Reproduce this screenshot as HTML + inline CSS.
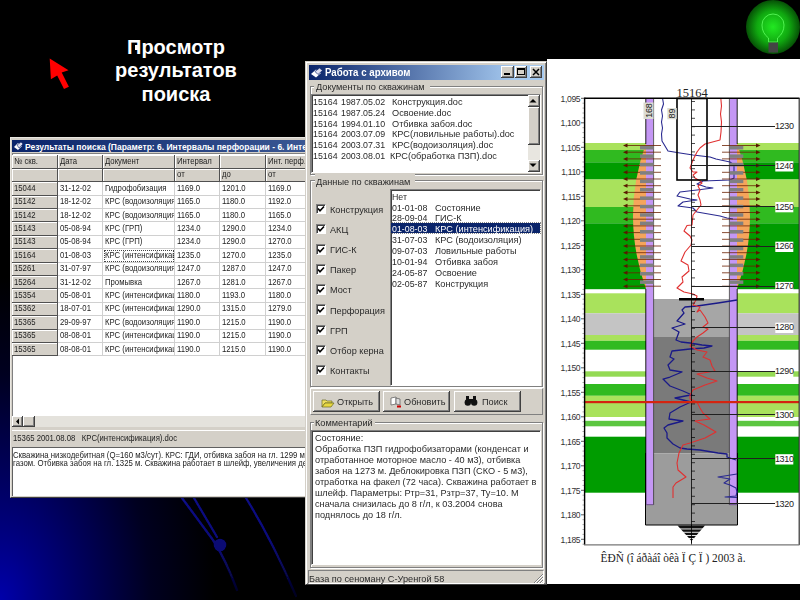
<!DOCTYPE html><html><head><meta charset="utf-8"><style>
*{margin:0;padding:0;box-sizing:border-box}
html,body{width:800px;height:600px;overflow:hidden;background:#000}
body{position:relative;font-family:"Liberation Sans",sans-serif;color:#000}
.abs{position:absolute}
.t{position:absolute;white-space:nowrap;line-height:1}
</style></head><body>
<svg class="abs" style="left:0;top:0" width="800" height="600">
<defs><radialGradient id="bg" cx="0" cy="600" r="215" gradientUnits="userSpaceOnUse" gradientTransform="translate(0,600) scale(1,1.5) translate(0,-600)">
<stop offset="0" stop-color="#0000aa"/><stop offset="0.2" stop-color="#000080"/><stop offset="0.45" stop-color="#000050"/><stop offset="0.7" stop-color="#000020"/><stop offset="1" stop-color="#000000"/></radialGradient></defs>
<rect width="800" height="600" fill="url(#bg)"/>
<defs><linearGradient id="lf" x1="0" y1="495" x2="0" y2="595" gradientUnits="userSpaceOnUse"><stop offset="0" stop-color="#1212a0"/><stop offset="0.45" stop-color="#0e0e90"/><stop offset="0.75" stop-color="#080860"/><stop offset="1" stop-color="#030326"/></linearGradient>
<filter id="bl" x="-20%" y="-20%" width="140%" height="140%"><feGaussianBlur stdDeviation="0.7"/></filter></defs>
<g filter="url(#bl)" fill="none" stroke="url(#lf)" stroke-width="2.3" opacity="0.85" stroke-linejoin="round" stroke-linecap="round">
<path d="M166 476 Q175 487 182 498 L213 540 Q226 560 237 590"/>
<path d="M180 476 Q188 487 194 498 L217 537"/>
<path d="M234 476 Q241 487 246 498 Q272 540 296 596"/>
<circle cx="220" cy="545" r="6.3" fill="#0a0a88" stroke="none"/>
</g>
</svg>
<div class="t" style="left:0;width:352px;top:35.5px;text-align:center;color:#fff;font-weight:bold;font-size:20px;line-height:23.8px;white-space:normal">Просмотр<br>результатов<br>поиска</div>
<div class="abs" style="left:135px;top:45px;width:3px;height:5px;background:#fff"></div><svg class="abs" style="left:0;top:0" width="100" height="100"><polygon points="49.7,58.6 68.5,70.2 61.7,72.5 68.9,86.7 64,89 57.2,75.5 50.9,79.2" fill="#ff0000"/></svg>
<svg class="abs" style="left:740px;top:0" width="60" height="60">
<defs><radialGradient id="gb" cx="33" cy="27" r="27" gradientUnits="userSpaceOnUse"><stop offset="0" stop-color="#22e822"/><stop offset="0.6" stop-color="#10a810"/><stop offset="1" stop-color="#065006"/></radialGradient></defs>
<circle cx="33" cy="27" r="27" fill="url(#gb)"/>
<path d="M28.5 42 L28.5 38 Q22 33 22 25 A11 11 0 0 1 44 25 Q44 33 37.5 38 L37.5 42 Z" fill="none" stroke="#60ff60" stroke-width="0.8"/>
<rect x="28.5" y="42.5" width="9.5" height="10" fill="#444"/>
</svg>
<div class="abs" style="left:10px;top:137px;width:300px;height:361px;background:#d4d0c8;border-top:1px solid #e8e6e0;border-left:1px solid #e8e6e0;border-bottom:1px solid #404040;overflow:hidden"><div class="abs" style="left:1px;top:2px;width:960px;height:12px;background:linear-gradient(to right,#0a246a,#a6caf0)"></div><svg class="abs" style="left:2px;top:3px" width="11" height="10"><path d="M1 6 L5 2 L9 5 L5 9 Z" fill="#fff"/><path d="M4 4 L8 1 L10 3 L6 7Z" fill="#dde" stroke="#0a246a" stroke-width="0.6"/></svg><div class="t" style="left:14px;top:5px;font-size:8.5px;font-weight:bold;color:#fff">Результаты поиска (Параметр: 6. Интервалы перфорации - 6. Интенсификация)</div><div class="abs" style="left:1px;top:15px;width:299px;height:264px;background:#fff;border-top:1px solid #808080;border-left:1px solid #808080"></div><div class="abs" style="left:1px;top:17.4px;width:46px;height:13.4px;background:#d4d0c8;border-right:1px solid #505050;border-bottom:1px solid #505050;box-shadow:inset 1px 1px #fff"></div><div class="abs" style="left:1.0px;top:17.4px;width:45px;height:12.4px;overflow:hidden"><div class="t" style="left:2px;top:1.5px;font-size:8.6px;transform:scaleX(0.9);transform-origin:0 0;color:#222">№ скв.</div></div><div class="abs" style="left:47px;top:17.4px;width:45px;height:13.4px;background:#d4d0c8;border-right:1px solid #505050;border-bottom:1px solid #505050;box-shadow:inset 1px 1px #fff"></div><div class="abs" style="left:47.0px;top:17.4px;width:44px;height:12.4px;overflow:hidden"><div class="t" style="left:2px;top:1.5px;font-size:8.6px;transform:scaleX(0.9);transform-origin:0 0;color:#222">Дата</div></div><div class="abs" style="left:92px;top:17.4px;width:72px;height:13.4px;background:#d4d0c8;border-right:1px solid #505050;border-bottom:1px solid #505050;box-shadow:inset 1px 1px #fff"></div><div class="abs" style="left:92.0px;top:17.4px;width:71px;height:12.4px;overflow:hidden"><div class="t" style="left:2px;top:1.5px;font-size:8.6px;transform:scaleX(0.9);transform-origin:0 0;color:#222">Документ</div></div><div class="abs" style="left:164px;top:17.4px;width:45px;height:13.4px;background:#d4d0c8;border-right:1px solid #505050;border-bottom:1px solid #505050;box-shadow:inset 1px 1px #fff"></div><div class="abs" style="left:164.0px;top:17.4px;width:44px;height:12.4px;overflow:hidden"><div class="t" style="left:2px;top:1.5px;font-size:8.6px;transform:scaleX(0.9);transform-origin:0 0;color:#222">Интервал</div></div><div class="abs" style="left:209px;top:17.4px;width:46px;height:13.4px;background:#d4d0c8;border-right:1px solid #505050;border-bottom:1px solid #505050;box-shadow:inset 1px 1px #fff"></div><div class="abs" style="left:255px;top:17.4px;width:75px;height:13.4px;background:#d4d0c8;border-right:1px solid #505050;border-bottom:1px solid #505050;box-shadow:inset 1px 1px #fff"></div><div class="abs" style="left:255.0px;top:17.4px;width:74px;height:12.4px;overflow:hidden"><div class="t" style="left:2px;top:1.5px;font-size:8.6px;transform:scaleX(0.9);transform-origin:0 0;color:#222">Инт. перф.</div></div><div class="abs" style="left:1px;top:30.8px;width:46px;height:13.4px;background:#d4d0c8;border-right:1px solid #505050;border-bottom:1px solid #505050;box-shadow:inset 1px 1px #fff"></div><div class="abs" style="left:47px;top:30.8px;width:45px;height:13.4px;background:#d4d0c8;border-right:1px solid #505050;border-bottom:1px solid #505050;box-shadow:inset 1px 1px #fff"></div><div class="abs" style="left:92px;top:30.8px;width:72px;height:13.4px;background:#d4d0c8;border-right:1px solid #505050;border-bottom:1px solid #505050;box-shadow:inset 1px 1px #fff"></div><div class="abs" style="left:164px;top:30.8px;width:45px;height:13.4px;background:#d4d0c8;border-right:1px solid #505050;border-bottom:1px solid #505050;box-shadow:inset 1px 1px #fff"></div><div class="abs" style="left:164.0px;top:30.8px;width:44px;height:12.4px;overflow:hidden"><div class="t" style="left:2px;top:1.5px;font-size:8.6px;transform:scaleX(0.9);transform-origin:0 0;color:#222">от</div></div><div class="abs" style="left:209px;top:30.8px;width:46px;height:13.4px;background:#d4d0c8;border-right:1px solid #505050;border-bottom:1px solid #505050;box-shadow:inset 1px 1px #fff"></div><div class="abs" style="left:209.0px;top:30.8px;width:45px;height:12.4px;overflow:hidden"><div class="t" style="left:2px;top:1.5px;font-size:8.6px;transform:scaleX(0.9);transform-origin:0 0;color:#222">до</div></div><div class="abs" style="left:255px;top:30.8px;width:75px;height:13.4px;background:#d4d0c8;border-right:1px solid #505050;border-bottom:1px solid #505050;box-shadow:inset 1px 1px #fff"></div><div class="abs" style="left:255.0px;top:30.8px;width:74px;height:12.4px;overflow:hidden"><div class="t" style="left:2px;top:1.5px;font-size:8.6px;transform:scaleX(0.9);transform-origin:0 0;color:#222">от</div></div><div class="abs" style="left:1px;top:44.2px;width:46px;height:13.4px;background:#d4d0c8;border-right:1px solid #505050;border-bottom:1px solid #505050;box-shadow:inset 1px 1px #fff"></div><div class="abs" style="left:1.0px;top:44.2px;width:45px;height:12.4px;overflow:hidden"><div class="t" style="left:2px;top:1.5px;font-size:8.6px;transform:scaleX(0.9);transform-origin:0 0;color:#222">15044</div></div><div class="abs" style="left:47px;top:44.2px;width:45px;height:13.4px;background:#fff;border-right:1px solid #d0d0d0;border-bottom:1px solid #d0d0d0"></div><div class="abs" style="left:47.0px;top:44.2px;width:44px;height:12.4px;overflow:hidden"><div class="t" style="left:2px;top:1.5px;font-size:8.6px;transform:scaleX(0.9);transform-origin:0 0;color:#222">31-12-02</div></div><div class="abs" style="left:92px;top:44.2px;width:72px;height:13.4px;background:#fff;border-right:1px solid #d0d0d0;border-bottom:1px solid #d0d0d0"></div><div class="abs" style="left:92.0px;top:44.2px;width:71px;height:12.4px;overflow:hidden"><div class="t" style="left:2px;top:1.5px;font-size:8.6px;transform:scaleX(0.9);transform-origin:0 0;color:#222">Гидрофобизация</div></div><div class="abs" style="left:164px;top:44.2px;width:45px;height:13.4px;background:#fff;border-right:1px solid #d0d0d0;border-bottom:1px solid #d0d0d0"></div><div class="abs" style="left:164.0px;top:44.2px;width:44px;height:12.4px;overflow:hidden"><div class="t" style="left:2px;top:1.5px;font-size:8.6px;transform:scaleX(0.9);transform-origin:0 0;color:#222">1169.0</div></div><div class="abs" style="left:209px;top:44.2px;width:46px;height:13.4px;background:#fff;border-right:1px solid #d0d0d0;border-bottom:1px solid #d0d0d0"></div><div class="abs" style="left:209.0px;top:44.2px;width:45px;height:12.4px;overflow:hidden"><div class="t" style="left:2px;top:1.5px;font-size:8.6px;transform:scaleX(0.9);transform-origin:0 0;color:#222">1201.0</div></div><div class="abs" style="left:255px;top:44.2px;width:75px;height:13.4px;background:#fff;border-right:1px solid #d0d0d0;border-bottom:1px solid #d0d0d0"></div><div class="abs" style="left:255.0px;top:44.2px;width:74px;height:12.4px;overflow:hidden"><div class="t" style="left:2px;top:1.5px;font-size:8.6px;transform:scaleX(0.9);transform-origin:0 0;color:#222">1169.0</div></div><div class="abs" style="left:1px;top:57.6px;width:46px;height:13.4px;background:#d4d0c8;border-right:1px solid #505050;border-bottom:1px solid #505050;box-shadow:inset 1px 1px #fff"></div><div class="abs" style="left:1.0px;top:57.6px;width:45px;height:12.4px;overflow:hidden"><div class="t" style="left:2px;top:1.5px;font-size:8.6px;transform:scaleX(0.9);transform-origin:0 0;color:#222">15142</div></div><div class="abs" style="left:47px;top:57.6px;width:45px;height:13.4px;background:#fff;border-right:1px solid #d0d0d0;border-bottom:1px solid #d0d0d0"></div><div class="abs" style="left:47.0px;top:57.6px;width:44px;height:12.4px;overflow:hidden"><div class="t" style="left:2px;top:1.5px;font-size:8.6px;transform:scaleX(0.9);transform-origin:0 0;color:#222">18-12-02</div></div><div class="abs" style="left:92px;top:57.6px;width:72px;height:13.4px;background:#fff;border-right:1px solid #d0d0d0;border-bottom:1px solid #d0d0d0"></div><div class="abs" style="left:92.0px;top:57.6px;width:71px;height:12.4px;overflow:hidden"><div class="t" style="left:2px;top:1.5px;font-size:8.6px;transform:scaleX(0.9);transform-origin:0 0;color:#222">КРС (водоизоляция</div></div><div class="abs" style="left:164px;top:57.6px;width:45px;height:13.4px;background:#fff;border-right:1px solid #d0d0d0;border-bottom:1px solid #d0d0d0"></div><div class="abs" style="left:164.0px;top:57.6px;width:44px;height:12.4px;overflow:hidden"><div class="t" style="left:2px;top:1.5px;font-size:8.6px;transform:scaleX(0.9);transform-origin:0 0;color:#222">1165.0</div></div><div class="abs" style="left:209px;top:57.6px;width:46px;height:13.4px;background:#fff;border-right:1px solid #d0d0d0;border-bottom:1px solid #d0d0d0"></div><div class="abs" style="left:209.0px;top:57.6px;width:45px;height:12.4px;overflow:hidden"><div class="t" style="left:2px;top:1.5px;font-size:8.6px;transform:scaleX(0.9);transform-origin:0 0;color:#222">1180.0</div></div><div class="abs" style="left:255px;top:57.6px;width:75px;height:13.4px;background:#fff;border-right:1px solid #d0d0d0;border-bottom:1px solid #d0d0d0"></div><div class="abs" style="left:255.0px;top:57.6px;width:74px;height:12.4px;overflow:hidden"><div class="t" style="left:2px;top:1.5px;font-size:8.6px;transform:scaleX(0.9);transform-origin:0 0;color:#222">1192.0</div></div><div class="abs" style="left:1px;top:71.0px;width:46px;height:13.4px;background:#d4d0c8;border-right:1px solid #505050;border-bottom:1px solid #505050;box-shadow:inset 1px 1px #fff"></div><div class="abs" style="left:1.0px;top:71.0px;width:45px;height:12.4px;overflow:hidden"><div class="t" style="left:2px;top:1.5px;font-size:8.6px;transform:scaleX(0.9);transform-origin:0 0;color:#222">15142</div></div><div class="abs" style="left:47px;top:71.0px;width:45px;height:13.4px;background:#fff;border-right:1px solid #d0d0d0;border-bottom:1px solid #d0d0d0"></div><div class="abs" style="left:47.0px;top:71.0px;width:44px;height:12.4px;overflow:hidden"><div class="t" style="left:2px;top:1.5px;font-size:8.6px;transform:scaleX(0.9);transform-origin:0 0;color:#222">18-12-02</div></div><div class="abs" style="left:92px;top:71.0px;width:72px;height:13.4px;background:#fff;border-right:1px solid #d0d0d0;border-bottom:1px solid #d0d0d0"></div><div class="abs" style="left:92.0px;top:71.0px;width:71px;height:12.4px;overflow:hidden"><div class="t" style="left:2px;top:1.5px;font-size:8.6px;transform:scaleX(0.9);transform-origin:0 0;color:#222">КРС (водоизоляция</div></div><div class="abs" style="left:164px;top:71.0px;width:45px;height:13.4px;background:#fff;border-right:1px solid #d0d0d0;border-bottom:1px solid #d0d0d0"></div><div class="abs" style="left:164.0px;top:71.0px;width:44px;height:12.4px;overflow:hidden"><div class="t" style="left:2px;top:1.5px;font-size:8.6px;transform:scaleX(0.9);transform-origin:0 0;color:#222">1165.0</div></div><div class="abs" style="left:209px;top:71.0px;width:46px;height:13.4px;background:#fff;border-right:1px solid #d0d0d0;border-bottom:1px solid #d0d0d0"></div><div class="abs" style="left:209.0px;top:71.0px;width:45px;height:12.4px;overflow:hidden"><div class="t" style="left:2px;top:1.5px;font-size:8.6px;transform:scaleX(0.9);transform-origin:0 0;color:#222">1180.0</div></div><div class="abs" style="left:255px;top:71.0px;width:75px;height:13.4px;background:#fff;border-right:1px solid #d0d0d0;border-bottom:1px solid #d0d0d0"></div><div class="abs" style="left:255.0px;top:71.0px;width:74px;height:12.4px;overflow:hidden"><div class="t" style="left:2px;top:1.5px;font-size:8.6px;transform:scaleX(0.9);transform-origin:0 0;color:#222">1165.0</div></div><div class="abs" style="left:1px;top:84.4px;width:46px;height:13.4px;background:#d4d0c8;border-right:1px solid #505050;border-bottom:1px solid #505050;box-shadow:inset 1px 1px #fff"></div><div class="abs" style="left:1.0px;top:84.4px;width:45px;height:12.4px;overflow:hidden"><div class="t" style="left:2px;top:1.5px;font-size:8.6px;transform:scaleX(0.9);transform-origin:0 0;color:#222">15143</div></div><div class="abs" style="left:47px;top:84.4px;width:45px;height:13.4px;background:#fff;border-right:1px solid #d0d0d0;border-bottom:1px solid #d0d0d0"></div><div class="abs" style="left:47.0px;top:84.4px;width:44px;height:12.4px;overflow:hidden"><div class="t" style="left:2px;top:1.5px;font-size:8.6px;transform:scaleX(0.9);transform-origin:0 0;color:#222">05-08-94</div></div><div class="abs" style="left:92px;top:84.4px;width:72px;height:13.4px;background:#fff;border-right:1px solid #d0d0d0;border-bottom:1px solid #d0d0d0"></div><div class="abs" style="left:92.0px;top:84.4px;width:71px;height:12.4px;overflow:hidden"><div class="t" style="left:2px;top:1.5px;font-size:8.6px;transform:scaleX(0.9);transform-origin:0 0;color:#222">КРС (ГРП)</div></div><div class="abs" style="left:164px;top:84.4px;width:45px;height:13.4px;background:#fff;border-right:1px solid #d0d0d0;border-bottom:1px solid #d0d0d0"></div><div class="abs" style="left:164.0px;top:84.4px;width:44px;height:12.4px;overflow:hidden"><div class="t" style="left:2px;top:1.5px;font-size:8.6px;transform:scaleX(0.9);transform-origin:0 0;color:#222">1234.0</div></div><div class="abs" style="left:209px;top:84.4px;width:46px;height:13.4px;background:#fff;border-right:1px solid #d0d0d0;border-bottom:1px solid #d0d0d0"></div><div class="abs" style="left:209.0px;top:84.4px;width:45px;height:12.4px;overflow:hidden"><div class="t" style="left:2px;top:1.5px;font-size:8.6px;transform:scaleX(0.9);transform-origin:0 0;color:#222">1290.0</div></div><div class="abs" style="left:255px;top:84.4px;width:75px;height:13.4px;background:#fff;border-right:1px solid #d0d0d0;border-bottom:1px solid #d0d0d0"></div><div class="abs" style="left:255.0px;top:84.4px;width:74px;height:12.4px;overflow:hidden"><div class="t" style="left:2px;top:1.5px;font-size:8.6px;transform:scaleX(0.9);transform-origin:0 0;color:#222">1234.0</div></div><div class="abs" style="left:1px;top:97.8px;width:46px;height:13.4px;background:#d4d0c8;border-right:1px solid #505050;border-bottom:1px solid #505050;box-shadow:inset 1px 1px #fff"></div><div class="abs" style="left:1.0px;top:97.8px;width:45px;height:12.4px;overflow:hidden"><div class="t" style="left:2px;top:1.5px;font-size:8.6px;transform:scaleX(0.9);transform-origin:0 0;color:#222">15143</div></div><div class="abs" style="left:47px;top:97.8px;width:45px;height:13.4px;background:#fff;border-right:1px solid #d0d0d0;border-bottom:1px solid #d0d0d0"></div><div class="abs" style="left:47.0px;top:97.8px;width:44px;height:12.4px;overflow:hidden"><div class="t" style="left:2px;top:1.5px;font-size:8.6px;transform:scaleX(0.9);transform-origin:0 0;color:#222">05-08-94</div></div><div class="abs" style="left:92px;top:97.8px;width:72px;height:13.4px;background:#fff;border-right:1px solid #d0d0d0;border-bottom:1px solid #d0d0d0"></div><div class="abs" style="left:92.0px;top:97.8px;width:71px;height:12.4px;overflow:hidden"><div class="t" style="left:2px;top:1.5px;font-size:8.6px;transform:scaleX(0.9);transform-origin:0 0;color:#222">КРС (ГРП)</div></div><div class="abs" style="left:164px;top:97.8px;width:45px;height:13.4px;background:#fff;border-right:1px solid #d0d0d0;border-bottom:1px solid #d0d0d0"></div><div class="abs" style="left:164.0px;top:97.8px;width:44px;height:12.4px;overflow:hidden"><div class="t" style="left:2px;top:1.5px;font-size:8.6px;transform:scaleX(0.9);transform-origin:0 0;color:#222">1234.0</div></div><div class="abs" style="left:209px;top:97.8px;width:46px;height:13.4px;background:#fff;border-right:1px solid #d0d0d0;border-bottom:1px solid #d0d0d0"></div><div class="abs" style="left:209.0px;top:97.8px;width:45px;height:12.4px;overflow:hidden"><div class="t" style="left:2px;top:1.5px;font-size:8.6px;transform:scaleX(0.9);transform-origin:0 0;color:#222">1290.0</div></div><div class="abs" style="left:255px;top:97.8px;width:75px;height:13.4px;background:#fff;border-right:1px solid #d0d0d0;border-bottom:1px solid #d0d0d0"></div><div class="abs" style="left:255.0px;top:97.8px;width:74px;height:12.4px;overflow:hidden"><div class="t" style="left:2px;top:1.5px;font-size:8.6px;transform:scaleX(0.9);transform-origin:0 0;color:#222">1270.0</div></div><div class="abs" style="left:1px;top:111.2px;width:46px;height:13.4px;background:#d4d0c8;border-right:1px solid #505050;border-bottom:1px solid #505050;box-shadow:inset 1px 1px #fff"></div><div class="abs" style="left:1.0px;top:111.2px;width:45px;height:12.4px;overflow:hidden"><div class="t" style="left:2px;top:1.5px;font-size:8.6px;transform:scaleX(0.9);transform-origin:0 0;color:#222">15164</div></div><div class="abs" style="left:47px;top:111.2px;width:45px;height:13.4px;background:#fff;border-right:1px solid #d0d0d0;border-bottom:1px solid #d0d0d0"></div><div class="abs" style="left:47.0px;top:111.2px;width:44px;height:12.4px;overflow:hidden"><div class="t" style="left:2px;top:1.5px;font-size:8.6px;transform:scaleX(0.9);transform-origin:0 0;color:#222">01-08-03</div></div><div class="abs" style="left:92px;top:111.2px;width:72px;height:13.4px;background:#fff;border-right:1px solid #d0d0d0;border-bottom:1px solid #d0d0d0"></div><div class="abs" style="left:93px;top:111.7px;width:70px;height:12.4px;border:1px dotted #444"></div><div class="abs" style="left:92.0px;top:111.2px;width:71px;height:12.4px;overflow:hidden"><div class="t" style="left:2px;top:1.5px;font-size:8.6px;transform:scaleX(0.9);transform-origin:0 0;color:#222">КРС (интенсификац</div></div><div class="abs" style="left:164px;top:111.2px;width:45px;height:13.4px;background:#fff;border-right:1px solid #d0d0d0;border-bottom:1px solid #d0d0d0"></div><div class="abs" style="left:164.0px;top:111.2px;width:44px;height:12.4px;overflow:hidden"><div class="t" style="left:2px;top:1.5px;font-size:8.6px;transform:scaleX(0.9);transform-origin:0 0;color:#222">1235.0</div></div><div class="abs" style="left:209px;top:111.2px;width:46px;height:13.4px;background:#fff;border-right:1px solid #d0d0d0;border-bottom:1px solid #d0d0d0"></div><div class="abs" style="left:209.0px;top:111.2px;width:45px;height:12.4px;overflow:hidden"><div class="t" style="left:2px;top:1.5px;font-size:8.6px;transform:scaleX(0.9);transform-origin:0 0;color:#222">1270.0</div></div><div class="abs" style="left:255px;top:111.2px;width:75px;height:13.4px;background:#fff;border-right:1px solid #d0d0d0;border-bottom:1px solid #d0d0d0"></div><div class="abs" style="left:255.0px;top:111.2px;width:74px;height:12.4px;overflow:hidden"><div class="t" style="left:2px;top:1.5px;font-size:8.6px;transform:scaleX(0.9);transform-origin:0 0;color:#222">1235.0</div></div><div class="abs" style="left:1px;top:124.6px;width:46px;height:13.4px;background:#d4d0c8;border-right:1px solid #505050;border-bottom:1px solid #505050;box-shadow:inset 1px 1px #fff"></div><div class="abs" style="left:1.0px;top:124.6px;width:45px;height:12.4px;overflow:hidden"><div class="t" style="left:2px;top:1.5px;font-size:8.6px;transform:scaleX(0.9);transform-origin:0 0;color:#222">15261</div></div><div class="abs" style="left:47px;top:124.6px;width:45px;height:13.4px;background:#fff;border-right:1px solid #d0d0d0;border-bottom:1px solid #d0d0d0"></div><div class="abs" style="left:47.0px;top:124.6px;width:44px;height:12.4px;overflow:hidden"><div class="t" style="left:2px;top:1.5px;font-size:8.6px;transform:scaleX(0.9);transform-origin:0 0;color:#222">31-07-97</div></div><div class="abs" style="left:92px;top:124.6px;width:72px;height:13.4px;background:#fff;border-right:1px solid #d0d0d0;border-bottom:1px solid #d0d0d0"></div><div class="abs" style="left:92.0px;top:124.6px;width:71px;height:12.4px;overflow:hidden"><div class="t" style="left:2px;top:1.5px;font-size:8.6px;transform:scaleX(0.9);transform-origin:0 0;color:#222">КРС (водоизоляция</div></div><div class="abs" style="left:164px;top:124.6px;width:45px;height:13.4px;background:#fff;border-right:1px solid #d0d0d0;border-bottom:1px solid #d0d0d0"></div><div class="abs" style="left:164.0px;top:124.6px;width:44px;height:12.4px;overflow:hidden"><div class="t" style="left:2px;top:1.5px;font-size:8.6px;transform:scaleX(0.9);transform-origin:0 0;color:#222">1247.0</div></div><div class="abs" style="left:209px;top:124.6px;width:46px;height:13.4px;background:#fff;border-right:1px solid #d0d0d0;border-bottom:1px solid #d0d0d0"></div><div class="abs" style="left:209.0px;top:124.6px;width:45px;height:12.4px;overflow:hidden"><div class="t" style="left:2px;top:1.5px;font-size:8.6px;transform:scaleX(0.9);transform-origin:0 0;color:#222">1287.0</div></div><div class="abs" style="left:255px;top:124.6px;width:75px;height:13.4px;background:#fff;border-right:1px solid #d0d0d0;border-bottom:1px solid #d0d0d0"></div><div class="abs" style="left:255.0px;top:124.6px;width:74px;height:12.4px;overflow:hidden"><div class="t" style="left:2px;top:1.5px;font-size:8.6px;transform:scaleX(0.9);transform-origin:0 0;color:#222">1247.0</div></div><div class="abs" style="left:1px;top:138.0px;width:46px;height:13.4px;background:#d4d0c8;border-right:1px solid #505050;border-bottom:1px solid #505050;box-shadow:inset 1px 1px #fff"></div><div class="abs" style="left:1.0px;top:138.0px;width:45px;height:12.4px;overflow:hidden"><div class="t" style="left:2px;top:1.5px;font-size:8.6px;transform:scaleX(0.9);transform-origin:0 0;color:#222">15264</div></div><div class="abs" style="left:47px;top:138.0px;width:45px;height:13.4px;background:#fff;border-right:1px solid #d0d0d0;border-bottom:1px solid #d0d0d0"></div><div class="abs" style="left:47.0px;top:138.0px;width:44px;height:12.4px;overflow:hidden"><div class="t" style="left:2px;top:1.5px;font-size:8.6px;transform:scaleX(0.9);transform-origin:0 0;color:#222">31-12-02</div></div><div class="abs" style="left:92px;top:138.0px;width:72px;height:13.4px;background:#fff;border-right:1px solid #d0d0d0;border-bottom:1px solid #d0d0d0"></div><div class="abs" style="left:92.0px;top:138.0px;width:71px;height:12.4px;overflow:hidden"><div class="t" style="left:2px;top:1.5px;font-size:8.6px;transform:scaleX(0.9);transform-origin:0 0;color:#222">Промывка</div></div><div class="abs" style="left:164px;top:138.0px;width:45px;height:13.4px;background:#fff;border-right:1px solid #d0d0d0;border-bottom:1px solid #d0d0d0"></div><div class="abs" style="left:164.0px;top:138.0px;width:44px;height:12.4px;overflow:hidden"><div class="t" style="left:2px;top:1.5px;font-size:8.6px;transform:scaleX(0.9);transform-origin:0 0;color:#222">1267.0</div></div><div class="abs" style="left:209px;top:138.0px;width:46px;height:13.4px;background:#fff;border-right:1px solid #d0d0d0;border-bottom:1px solid #d0d0d0"></div><div class="abs" style="left:209.0px;top:138.0px;width:45px;height:12.4px;overflow:hidden"><div class="t" style="left:2px;top:1.5px;font-size:8.6px;transform:scaleX(0.9);transform-origin:0 0;color:#222">1281.0</div></div><div class="abs" style="left:255px;top:138.0px;width:75px;height:13.4px;background:#fff;border-right:1px solid #d0d0d0;border-bottom:1px solid #d0d0d0"></div><div class="abs" style="left:255.0px;top:138.0px;width:74px;height:12.4px;overflow:hidden"><div class="t" style="left:2px;top:1.5px;font-size:8.6px;transform:scaleX(0.9);transform-origin:0 0;color:#222">1267.0</div></div><div class="abs" style="left:1px;top:151.4px;width:46px;height:13.4px;background:#d4d0c8;border-right:1px solid #505050;border-bottom:1px solid #505050;box-shadow:inset 1px 1px #fff"></div><div class="abs" style="left:1.0px;top:151.4px;width:45px;height:12.4px;overflow:hidden"><div class="t" style="left:2px;top:1.5px;font-size:8.6px;transform:scaleX(0.9);transform-origin:0 0;color:#222">15354</div></div><div class="abs" style="left:47px;top:151.4px;width:45px;height:13.4px;background:#fff;border-right:1px solid #d0d0d0;border-bottom:1px solid #d0d0d0"></div><div class="abs" style="left:47.0px;top:151.4px;width:44px;height:12.4px;overflow:hidden"><div class="t" style="left:2px;top:1.5px;font-size:8.6px;transform:scaleX(0.9);transform-origin:0 0;color:#222">05-08-01</div></div><div class="abs" style="left:92px;top:151.4px;width:72px;height:13.4px;background:#fff;border-right:1px solid #d0d0d0;border-bottom:1px solid #d0d0d0"></div><div class="abs" style="left:92.0px;top:151.4px;width:71px;height:12.4px;overflow:hidden"><div class="t" style="left:2px;top:1.5px;font-size:8.6px;transform:scaleX(0.9);transform-origin:0 0;color:#222">КРС (интенсификац</div></div><div class="abs" style="left:164px;top:151.4px;width:45px;height:13.4px;background:#fff;border-right:1px solid #d0d0d0;border-bottom:1px solid #d0d0d0"></div><div class="abs" style="left:164.0px;top:151.4px;width:44px;height:12.4px;overflow:hidden"><div class="t" style="left:2px;top:1.5px;font-size:8.6px;transform:scaleX(0.9);transform-origin:0 0;color:#222">1180.0</div></div><div class="abs" style="left:209px;top:151.4px;width:46px;height:13.4px;background:#fff;border-right:1px solid #d0d0d0;border-bottom:1px solid #d0d0d0"></div><div class="abs" style="left:209.0px;top:151.4px;width:45px;height:12.4px;overflow:hidden"><div class="t" style="left:2px;top:1.5px;font-size:8.6px;transform:scaleX(0.9);transform-origin:0 0;color:#222">1193.0</div></div><div class="abs" style="left:255px;top:151.4px;width:75px;height:13.4px;background:#fff;border-right:1px solid #d0d0d0;border-bottom:1px solid #d0d0d0"></div><div class="abs" style="left:255.0px;top:151.4px;width:74px;height:12.4px;overflow:hidden"><div class="t" style="left:2px;top:1.5px;font-size:8.6px;transform:scaleX(0.9);transform-origin:0 0;color:#222">1180.0</div></div><div class="abs" style="left:1px;top:164.8px;width:46px;height:13.4px;background:#d4d0c8;border-right:1px solid #505050;border-bottom:1px solid #505050;box-shadow:inset 1px 1px #fff"></div><div class="abs" style="left:1.0px;top:164.8px;width:45px;height:12.4px;overflow:hidden"><div class="t" style="left:2px;top:1.5px;font-size:8.6px;transform:scaleX(0.9);transform-origin:0 0;color:#222">15362</div></div><div class="abs" style="left:47px;top:164.8px;width:45px;height:13.4px;background:#fff;border-right:1px solid #d0d0d0;border-bottom:1px solid #d0d0d0"></div><div class="abs" style="left:47.0px;top:164.8px;width:44px;height:12.4px;overflow:hidden"><div class="t" style="left:2px;top:1.5px;font-size:8.6px;transform:scaleX(0.9);transform-origin:0 0;color:#222">18-07-01</div></div><div class="abs" style="left:92px;top:164.8px;width:72px;height:13.4px;background:#fff;border-right:1px solid #d0d0d0;border-bottom:1px solid #d0d0d0"></div><div class="abs" style="left:92.0px;top:164.8px;width:71px;height:12.4px;overflow:hidden"><div class="t" style="left:2px;top:1.5px;font-size:8.6px;transform:scaleX(0.9);transform-origin:0 0;color:#222">КРС (интенсификац</div></div><div class="abs" style="left:164px;top:164.8px;width:45px;height:13.4px;background:#fff;border-right:1px solid #d0d0d0;border-bottom:1px solid #d0d0d0"></div><div class="abs" style="left:164.0px;top:164.8px;width:44px;height:12.4px;overflow:hidden"><div class="t" style="left:2px;top:1.5px;font-size:8.6px;transform:scaleX(0.9);transform-origin:0 0;color:#222">1290.0</div></div><div class="abs" style="left:209px;top:164.8px;width:46px;height:13.4px;background:#fff;border-right:1px solid #d0d0d0;border-bottom:1px solid #d0d0d0"></div><div class="abs" style="left:209.0px;top:164.8px;width:45px;height:12.4px;overflow:hidden"><div class="t" style="left:2px;top:1.5px;font-size:8.6px;transform:scaleX(0.9);transform-origin:0 0;color:#222">1315.0</div></div><div class="abs" style="left:255px;top:164.8px;width:75px;height:13.4px;background:#fff;border-right:1px solid #d0d0d0;border-bottom:1px solid #d0d0d0"></div><div class="abs" style="left:255.0px;top:164.8px;width:74px;height:12.4px;overflow:hidden"><div class="t" style="left:2px;top:1.5px;font-size:8.6px;transform:scaleX(0.9);transform-origin:0 0;color:#222">1279.0</div></div><div class="abs" style="left:1px;top:178.2px;width:46px;height:13.4px;background:#d4d0c8;border-right:1px solid #505050;border-bottom:1px solid #505050;box-shadow:inset 1px 1px #fff"></div><div class="abs" style="left:1.0px;top:178.2px;width:45px;height:12.4px;overflow:hidden"><div class="t" style="left:2px;top:1.5px;font-size:8.6px;transform:scaleX(0.9);transform-origin:0 0;color:#222">15365</div></div><div class="abs" style="left:47px;top:178.2px;width:45px;height:13.4px;background:#fff;border-right:1px solid #d0d0d0;border-bottom:1px solid #d0d0d0"></div><div class="abs" style="left:47.0px;top:178.2px;width:44px;height:12.4px;overflow:hidden"><div class="t" style="left:2px;top:1.5px;font-size:8.6px;transform:scaleX(0.9);transform-origin:0 0;color:#222">29-09-97</div></div><div class="abs" style="left:92px;top:178.2px;width:72px;height:13.4px;background:#fff;border-right:1px solid #d0d0d0;border-bottom:1px solid #d0d0d0"></div><div class="abs" style="left:92.0px;top:178.2px;width:71px;height:12.4px;overflow:hidden"><div class="t" style="left:2px;top:1.5px;font-size:8.6px;transform:scaleX(0.9);transform-origin:0 0;color:#222">КРС (водоизоляция</div></div><div class="abs" style="left:164px;top:178.2px;width:45px;height:13.4px;background:#fff;border-right:1px solid #d0d0d0;border-bottom:1px solid #d0d0d0"></div><div class="abs" style="left:164.0px;top:178.2px;width:44px;height:12.4px;overflow:hidden"><div class="t" style="left:2px;top:1.5px;font-size:8.6px;transform:scaleX(0.9);transform-origin:0 0;color:#222">1190.0</div></div><div class="abs" style="left:209px;top:178.2px;width:46px;height:13.4px;background:#fff;border-right:1px solid #d0d0d0;border-bottom:1px solid #d0d0d0"></div><div class="abs" style="left:209.0px;top:178.2px;width:45px;height:12.4px;overflow:hidden"><div class="t" style="left:2px;top:1.5px;font-size:8.6px;transform:scaleX(0.9);transform-origin:0 0;color:#222">1215.0</div></div><div class="abs" style="left:255px;top:178.2px;width:75px;height:13.4px;background:#fff;border-right:1px solid #d0d0d0;border-bottom:1px solid #d0d0d0"></div><div class="abs" style="left:255.0px;top:178.2px;width:74px;height:12.4px;overflow:hidden"><div class="t" style="left:2px;top:1.5px;font-size:8.6px;transform:scaleX(0.9);transform-origin:0 0;color:#222">1190.0</div></div><div class="abs" style="left:1px;top:191.6px;width:46px;height:13.4px;background:#d4d0c8;border-right:1px solid #505050;border-bottom:1px solid #505050;box-shadow:inset 1px 1px #fff"></div><div class="abs" style="left:1.0px;top:191.6px;width:45px;height:12.4px;overflow:hidden"><div class="t" style="left:2px;top:1.5px;font-size:8.6px;transform:scaleX(0.9);transform-origin:0 0;color:#222">15365</div></div><div class="abs" style="left:47px;top:191.6px;width:45px;height:13.4px;background:#fff;border-right:1px solid #d0d0d0;border-bottom:1px solid #d0d0d0"></div><div class="abs" style="left:47.0px;top:191.6px;width:44px;height:12.4px;overflow:hidden"><div class="t" style="left:2px;top:1.5px;font-size:8.6px;transform:scaleX(0.9);transform-origin:0 0;color:#222">08-08-01</div></div><div class="abs" style="left:92px;top:191.6px;width:72px;height:13.4px;background:#fff;border-right:1px solid #d0d0d0;border-bottom:1px solid #d0d0d0"></div><div class="abs" style="left:92.0px;top:191.6px;width:71px;height:12.4px;overflow:hidden"><div class="t" style="left:2px;top:1.5px;font-size:8.6px;transform:scaleX(0.9);transform-origin:0 0;color:#222">КРС (интенсификац</div></div><div class="abs" style="left:164px;top:191.6px;width:45px;height:13.4px;background:#fff;border-right:1px solid #d0d0d0;border-bottom:1px solid #d0d0d0"></div><div class="abs" style="left:164.0px;top:191.6px;width:44px;height:12.4px;overflow:hidden"><div class="t" style="left:2px;top:1.5px;font-size:8.6px;transform:scaleX(0.9);transform-origin:0 0;color:#222">1190.0</div></div><div class="abs" style="left:209px;top:191.6px;width:46px;height:13.4px;background:#fff;border-right:1px solid #d0d0d0;border-bottom:1px solid #d0d0d0"></div><div class="abs" style="left:209.0px;top:191.6px;width:45px;height:12.4px;overflow:hidden"><div class="t" style="left:2px;top:1.5px;font-size:8.6px;transform:scaleX(0.9);transform-origin:0 0;color:#222">1215.0</div></div><div class="abs" style="left:255px;top:191.6px;width:75px;height:13.4px;background:#fff;border-right:1px solid #d0d0d0;border-bottom:1px solid #d0d0d0"></div><div class="abs" style="left:255.0px;top:191.6px;width:74px;height:12.4px;overflow:hidden"><div class="t" style="left:2px;top:1.5px;font-size:8.6px;transform:scaleX(0.9);transform-origin:0 0;color:#222">1190.0</div></div><div class="abs" style="left:1px;top:205.0px;width:46px;height:13.4px;background:#d4d0c8;border-right:1px solid #505050;border-bottom:1px solid #505050;box-shadow:inset 1px 1px #fff"></div><div class="abs" style="left:1.0px;top:205.0px;width:45px;height:12.4px;overflow:hidden"><div class="t" style="left:2px;top:1.5px;font-size:8.6px;transform:scaleX(0.9);transform-origin:0 0;color:#222">15365</div></div><div class="abs" style="left:47px;top:205.0px;width:45px;height:13.4px;background:#fff;border-right:1px solid #d0d0d0;border-bottom:1px solid #d0d0d0"></div><div class="abs" style="left:47.0px;top:205.0px;width:44px;height:12.4px;overflow:hidden"><div class="t" style="left:2px;top:1.5px;font-size:8.6px;transform:scaleX(0.9);transform-origin:0 0;color:#222">08-08-01</div></div><div class="abs" style="left:92px;top:205.0px;width:72px;height:13.4px;background:#fff;border-right:1px solid #d0d0d0;border-bottom:1px solid #d0d0d0"></div><div class="abs" style="left:92.0px;top:205.0px;width:71px;height:12.4px;overflow:hidden"><div class="t" style="left:2px;top:1.5px;font-size:8.6px;transform:scaleX(0.9);transform-origin:0 0;color:#222">КРС (интенсификац</div></div><div class="abs" style="left:164px;top:205.0px;width:45px;height:13.4px;background:#fff;border-right:1px solid #d0d0d0;border-bottom:1px solid #d0d0d0"></div><div class="abs" style="left:164.0px;top:205.0px;width:44px;height:12.4px;overflow:hidden"><div class="t" style="left:2px;top:1.5px;font-size:8.6px;transform:scaleX(0.9);transform-origin:0 0;color:#222">1190.0</div></div><div class="abs" style="left:209px;top:205.0px;width:46px;height:13.4px;background:#fff;border-right:1px solid #d0d0d0;border-bottom:1px solid #d0d0d0"></div><div class="abs" style="left:209.0px;top:205.0px;width:45px;height:12.4px;overflow:hidden"><div class="t" style="left:2px;top:1.5px;font-size:8.6px;transform:scaleX(0.9);transform-origin:0 0;color:#222">1215.0</div></div><div class="abs" style="left:255px;top:205.0px;width:75px;height:13.4px;background:#fff;border-right:1px solid #d0d0d0;border-bottom:1px solid #d0d0d0"></div><div class="abs" style="left:255.0px;top:205.0px;width:74px;height:12.4px;overflow:hidden"><div class="t" style="left:2px;top:1.5px;font-size:8.6px;transform:scaleX(0.9);transform-origin:0 0;color:#222">1190.0</div></div><div class="abs" style="left:1px;top:278px;width:299px;height:11px;background:#e4e2dc"></div><div class="abs" style="left:1px;top:278px;width:11px;height:11px;background:#d4d0c8;border-right:1px solid #404040;border-bottom:1px solid #404040;box-shadow:inset 1px 1px #fff,inset -1px -1px #808080"></div><svg class="abs" style="left:4px;top:280px" width="6" height="7"><path d="M4 0.5 L1 3.5 L4 6.5Z" fill="#000"/></svg><div class="abs" style="left:12px;top:278px;width:12px;height:11px;background:#d4d0c8;border-right:1px solid #404040;border-bottom:1px solid #404040;box-shadow:inset 1px 1px #fff,inset -1px -1px #808080"></div><div class="abs" style="left:1px;top:292px;width:299px;height:17px;background:#d4d0c8;border-top:1px solid #fff"></div><div class="t" style="left:1.5px;top:296px;font-size:8.6px;transform:scaleX(0.9);transform-origin:0 0;color:#222">15365 2001.08.08&nbsp;&nbsp; КРС(интенсификация).doc</div><div class="abs" style="left:1px;top:309px;width:299px;height:49px;background:#fff;border-top:1px solid #606060;border-left:1px solid #606060"></div><div class="t" style="left:2px;top:312.5px;font-size:8.4px;line-height:8.6px;transform:scaleX(0.93);transform-origin:0 0;color:#222">Скважина низкодебитная (Q=160 м3/сут). КРС: ГДИ, отбивка забоя на гл. 1299 м,<br>газом. Отбивка забоя на гл. 1325 м. Скважина работает в шлейф, увеличения дебита</div></div><div class="abs" style="left:305px;top:61px;width:242px;height:524px;background:#d4d0c8;border-top:1px solid #d4d0c8;border-left:1px solid #d4d0c8;border-right:1px solid #404040;border-bottom:1px solid #404040;box-shadow:inset 1px 1px #fff,inset -1px -1px #808080"><div class="abs" style="left:2.5px;top:3.0px;width:235.5px;height:14.5px;background:linear-gradient(to right,#0a246a,#a6caf0 88%)"></div><svg class="abs" style="left:4px;top:5px" width="14" height="12"><path d="M1 7 L6 2.5 L11 6 L6 10.5 Z" fill="#fff"/><path d="M5 4.5 L9.5 1 L12.5 3.5 L8 7.5Z" fill="#e0e0f0" stroke="#0a246a" stroke-width="0.7"/></svg><div class="t" style="left:18.5px;top:5.98px;font-size:10.3px;transform:scaleX(0.940);transform-origin:0 0;color:#fff;font-weight:bold">Работа с архивом</div><div class="abs" style="left:195.0px;top:4.0px;width:12.5px;height:11.5px;background:#d4d0c8;border-right:1px solid #404040;border-bottom:1px solid #404040;box-shadow:inset 1px 1px #fff,inset -1px -1px #808080"></div><div class="abs" style="left:208.5px;top:4.0px;width:12.5px;height:11.5px;background:#d4d0c8;border-right:1px solid #404040;border-bottom:1px solid #404040;box-shadow:inset 1px 1px #fff,inset -1px -1px #808080"></div><div class="abs" style="left:223.5px;top:4.0px;width:12.5px;height:11.5px;background:#d4d0c8;border-right:1px solid #404040;border-bottom:1px solid #404040;box-shadow:inset 1px 1px #fff,inset -1px -1px #808080"></div><div class="abs" style="left:198.0px;top:11.0px;width:6px;height:2px;background:#000"></div><div class="abs" style="left:211.0px;top:6.0px;width:8px;height:7px;border:1px solid #000;border-top-width:2px"></div><svg class="abs" style="left:226px;top:6px" width="8" height="8"><path d="M1 1 L7 7 M7 1 L1 7" stroke="#000" stroke-width="1.5"/></svg><div class="abs" style="left:3.5px;top:23.5px;width:233.0px;height:89.5px;border:1px solid #808080;box-shadow:1px 1px #fff, inset 1px 1px #fff"></div><div class="abs" style="left:8.0px;top:18.0px;width:116.0px;height:10.0px;background:#d4d0c8"></div><div class="t" style="left:9.5px;top:20.17px;font-size:9.6px;transform:scaleX(0.955);transform-origin:0 0;color:#2a2a2a">Документы по скважинам</div><div class="abs" style="left:4.5px;top:31.5px;width:230.5px;height:79.5px;background:#fff;border-top:1px solid #808080;border-left:1px solid #808080;border-bottom:1px solid #fff;border-right:1px solid #fff;box-shadow:inset 1px 1px #404040"></div><div class="t" style="left:6.7px;top:35.27px;font-size:9.6px;transform:scaleX(0.920);transform-origin:0 0;color:#2a2a2a">15164</div><div class="t" style="left:34.5px;top:35.27px;font-size:9.6px;transform:scaleX(0.920);transform-origin:0 0;color:#2a2a2a">1987.05.02</div><div class="t" style="left:86.2px;top:35.27px;font-size:9.6px;transform:scaleX(0.955);transform-origin:0 0;color:#2a2a2a">Конструкция.doc</div><div class="t" style="left:6.7px;top:45.92px;font-size:9.6px;transform:scaleX(0.920);transform-origin:0 0;color:#2a2a2a">15164</div><div class="t" style="left:34.5px;top:45.92px;font-size:9.6px;transform:scaleX(0.920);transform-origin:0 0;color:#2a2a2a">1987.05.24</div><div class="t" style="left:86.2px;top:45.92px;font-size:9.6px;transform:scaleX(0.955);transform-origin:0 0;color:#2a2a2a">Освоение.doc</div><div class="t" style="left:6.7px;top:56.57px;font-size:9.6px;transform:scaleX(0.920);transform-origin:0 0;color:#2a2a2a">15164</div><div class="t" style="left:34.5px;top:56.57px;font-size:9.6px;transform:scaleX(0.920);transform-origin:0 0;color:#2a2a2a">1994.01.10</div><div class="t" style="left:86.2px;top:56.57px;font-size:9.6px;transform:scaleX(0.955);transform-origin:0 0;color:#2a2a2a">Отбивка забоя.doc</div><div class="t" style="left:6.7px;top:67.22px;font-size:9.6px;transform:scaleX(0.920);transform-origin:0 0;color:#2a2a2a">15164</div><div class="t" style="left:34.5px;top:67.22px;font-size:9.6px;transform:scaleX(0.920);transform-origin:0 0;color:#2a2a2a">2003.07.09</div><div class="t" style="left:86.2px;top:67.22px;font-size:9.6px;transform:scaleX(0.955);transform-origin:0 0;color:#2a2a2a">КРС(ловильные работы).doc</div><div class="t" style="left:6.7px;top:77.87px;font-size:9.6px;transform:scaleX(0.920);transform-origin:0 0;color:#2a2a2a">15164</div><div class="t" style="left:34.5px;top:77.87px;font-size:9.6px;transform:scaleX(0.920);transform-origin:0 0;color:#2a2a2a">2003.07.31</div><div class="t" style="left:86.2px;top:77.87px;font-size:9.6px;transform:scaleX(0.955);transform-origin:0 0;color:#2a2a2a">КРС(водоизоляция).doc</div><div class="t" style="left:6.7px;top:88.52px;font-size:9.6px;transform:scaleX(0.920);transform-origin:0 0;color:#2a2a2a">15164</div><div class="t" style="left:34.5px;top:88.52px;font-size:9.6px;transform:scaleX(0.920);transform-origin:0 0;color:#2a2a2a">2003.08.01</div><div class="t" style="left:84.0px;top:88.52px;font-size:9.6px;transform:scaleX(0.955);transform-origin:0 0;color:#2a2a2a">КРС(обработка ПЗП).doc</div><div class="abs" style="left:221.5px;top:33.0px;width:12.0px;height:76.5px;background:#e8e6e0"></div><div class="abs" style="left:221.5px;top:33.0px;width:12.0px;height:11.5px;background:#d4d0c8;border-right:1px solid #404040;border-bottom:1px solid #404040;box-shadow:inset 1px 1px #fff,inset -1px -1px #808080"></div><div class="abs" style="left:221.5px;top:98.0px;width:12.0px;height:11.5px;background:#d4d0c8;border-right:1px solid #404040;border-bottom:1px solid #404040;box-shadow:inset 1px 1px #fff,inset -1px -1px #808080"></div><div class="abs" style="left:221.5px;top:44.5px;width:12.0px;height:38.5px;background:#d4d0c8;border-right:1px solid #404040;border-bottom:1px solid #404040;box-shadow:inset 1px 1px #fff,inset -1px -1px #808080"></div><svg class="abs" style="left:223px;top:36px" width="8" height="5"><path d="M0.5 4.5 L4 1 L7.5 4.5Z" fill="#000"/></svg><svg class="abs" style="left:223px;top:101px" width="8" height="5"><path d="M0.5 0.5 L4 4 L7.5 0.5Z" fill="#000"/></svg><div class="abs" style="left:3.5px;top:118.0px;width:233.0px;height:207.0px;border:1px solid #808080;box-shadow:1px 1px #fff, inset 1px 1px #fff"></div><div class="abs" style="left:9.0px;top:112.0px;width:100.0px;height:10.0px;background:#d4d0c8"></div><div class="t" style="left:9.7px;top:114.97px;font-size:9.6px;transform:scaleX(0.955);transform-origin:0 0;color:#2a2a2a">Данные по скважинам</div><div class="abs" style="left:83.5px;top:126.5px;width:151.5px;height:197.0px;background:#fff;border-top:1px solid #808080;border-left:1px solid #808080;border-bottom:1px solid #fff;border-right:1px solid #fff;box-shadow:inset 1px 1px #404040"></div><div class="t" style="left:86.2px;top:129.77px;font-size:9.6px;transform:scaleX(0.920);transform-origin:0 0;color:#2a2a2a">Нет</div><div class="t" style="left:86.2px;top:140.62px;font-size:9.6px;transform:scaleX(0.920);transform-origin:0 0;color:#2a2a2a">01-01-08</div><div class="t" style="left:128.5px;top:140.62px;font-size:9.6px;transform:scaleX(0.955);transform-origin:0 0;color:#2a2a2a">Состояние</div><div class="t" style="left:86.2px;top:151.47px;font-size:9.6px;transform:scaleX(0.920);transform-origin:0 0;color:#2a2a2a">28-09-04</div><div class="t" style="left:128.5px;top:151.47px;font-size:9.6px;transform:scaleX(0.955);transform-origin:0 0;color:#2a2a2a">ГИС-К</div><div class="abs" style="left:85.0px;top:161.4px;width:148.5px;height:9.8px;background:#0a246a;outline:1px dotted #888"></div><div class="t" style="left:86.2px;top:162.32px;font-size:9.6px;transform:scaleX(0.920);transform-origin:0 0;color:#fff">01-08-03</div><div class="t" style="left:128.5px;top:162.32px;font-size:9.6px;transform:scaleX(0.955);transform-origin:0 0;color:#fff">КРС (интенсификация)</div><div class="t" style="left:86.2px;top:173.17px;font-size:9.6px;transform:scaleX(0.920);transform-origin:0 0;color:#2a2a2a">31-07-03</div><div class="t" style="left:128.5px;top:173.17px;font-size:9.6px;transform:scaleX(0.955);transform-origin:0 0;color:#2a2a2a">КРС (водоизоляция)</div><div class="t" style="left:86.2px;top:184.02px;font-size:9.6px;transform:scaleX(0.920);transform-origin:0 0;color:#2a2a2a">09-07-03</div><div class="t" style="left:128.5px;top:184.02px;font-size:9.6px;transform:scaleX(0.955);transform-origin:0 0;color:#2a2a2a">Ловильные работы</div><div class="t" style="left:86.2px;top:194.87px;font-size:9.6px;transform:scaleX(0.920);transform-origin:0 0;color:#2a2a2a">10-01-94</div><div class="t" style="left:128.5px;top:194.87px;font-size:9.6px;transform:scaleX(0.955);transform-origin:0 0;color:#2a2a2a">Отбивка забоя</div><div class="t" style="left:86.2px;top:205.72px;font-size:9.6px;transform:scaleX(0.920);transform-origin:0 0;color:#2a2a2a">24-05-87</div><div class="t" style="left:128.5px;top:205.72px;font-size:9.6px;transform:scaleX(0.955);transform-origin:0 0;color:#2a2a2a">Освоение</div><div class="t" style="left:86.2px;top:216.57px;font-size:9.6px;transform:scaleX(0.920);transform-origin:0 0;color:#2a2a2a">02-05-87</div><div class="t" style="left:128.5px;top:216.57px;font-size:9.6px;transform:scaleX(0.955);transform-origin:0 0;color:#2a2a2a">Конструкция</div><div class="abs" style="left:9.5px;top:141.7px;width:10.5px;height:10.5px;background:#fff;border-top:1px solid #808080;border-left:1px solid #808080;border-bottom:1px solid #fff;border-right:1px solid #fff;box-shadow:inset 1px 1px #404040"></div><svg class="abs" style="left:11.0px;top:143.2px" width="8" height="8"><path d="M1 3.5 L3 5.8 L7 1.5" stroke="#000" stroke-width="1.6" fill="none"/></svg><div class="t" style="left:24.0px;top:142.77px;font-size:9.6px;transform:scaleX(0.955);transform-origin:0 0;color:#2a2a2a">Конструкция</div><div class="abs" style="left:9.5px;top:161.8px;width:10.5px;height:10.5px;background:#fff;border-top:1px solid #808080;border-left:1px solid #808080;border-bottom:1px solid #fff;border-right:1px solid #fff;box-shadow:inset 1px 1px #404040"></div><svg class="abs" style="left:11.0px;top:163.3px" width="8" height="8"><path d="M1 3.5 L3 5.8 L7 1.5" stroke="#000" stroke-width="1.6" fill="none"/></svg><div class="t" style="left:24.0px;top:162.92px;font-size:9.6px;transform:scaleX(0.955);transform-origin:0 0;color:#2a2a2a">АКЦ</div><div class="abs" style="left:9.5px;top:182.0px;width:10.5px;height:10.5px;background:#fff;border-top:1px solid #808080;border-left:1px solid #808080;border-bottom:1px solid #fff;border-right:1px solid #fff;box-shadow:inset 1px 1px #404040"></div><svg class="abs" style="left:11.0px;top:183.5px" width="8" height="8"><path d="M1 3.5 L3 5.8 L7 1.5" stroke="#000" stroke-width="1.6" fill="none"/></svg><div class="t" style="left:24.0px;top:183.07px;font-size:9.6px;transform:scaleX(0.955);transform-origin:0 0;color:#2a2a2a">ГИС-К</div><div class="abs" style="left:9.5px;top:202.1px;width:10.5px;height:10.5px;background:#fff;border-top:1px solid #808080;border-left:1px solid #808080;border-bottom:1px solid #fff;border-right:1px solid #fff;box-shadow:inset 1px 1px #404040"></div><svg class="abs" style="left:11.0px;top:203.6px" width="8" height="8"><path d="M1 3.5 L3 5.8 L7 1.5" stroke="#000" stroke-width="1.6" fill="none"/></svg><div class="t" style="left:24.0px;top:203.22px;font-size:9.6px;transform:scaleX(0.955);transform-origin:0 0;color:#2a2a2a">Пакер</div><div class="abs" style="left:9.5px;top:222.3px;width:10.5px;height:10.5px;background:#fff;border-top:1px solid #808080;border-left:1px solid #808080;border-bottom:1px solid #fff;border-right:1px solid #fff;box-shadow:inset 1px 1px #404040"></div><svg class="abs" style="left:11.0px;top:223.8px" width="8" height="8"><path d="M1 3.5 L3 5.8 L7 1.5" stroke="#000" stroke-width="1.6" fill="none"/></svg><div class="t" style="left:24.0px;top:223.37px;font-size:9.6px;transform:scaleX(0.955);transform-origin:0 0;color:#2a2a2a">Мост</div><div class="abs" style="left:9.5px;top:242.4px;width:10.5px;height:10.5px;background:#fff;border-top:1px solid #808080;border-left:1px solid #808080;border-bottom:1px solid #fff;border-right:1px solid #fff;box-shadow:inset 1px 1px #404040"></div><svg class="abs" style="left:11.0px;top:243.9px" width="8" height="8"><path d="M1 3.5 L3 5.8 L7 1.5" stroke="#000" stroke-width="1.6" fill="none"/></svg><div class="t" style="left:24.0px;top:243.52px;font-size:9.6px;transform:scaleX(0.955);transform-origin:0 0;color:#2a2a2a">Перфорация</div><div class="abs" style="left:9.5px;top:262.6px;width:10.5px;height:10.5px;background:#fff;border-top:1px solid #808080;border-left:1px solid #808080;border-bottom:1px solid #fff;border-right:1px solid #fff;box-shadow:inset 1px 1px #404040"></div><svg class="abs" style="left:11.0px;top:264.1px" width="8" height="8"><path d="M1 3.5 L3 5.8 L7 1.5" stroke="#000" stroke-width="1.6" fill="none"/></svg><div class="t" style="left:24.0px;top:263.67px;font-size:9.6px;transform:scaleX(0.955);transform-origin:0 0;color:#2a2a2a">ГРП</div><div class="abs" style="left:9.5px;top:282.8px;width:10.5px;height:10.5px;background:#fff;border-top:1px solid #808080;border-left:1px solid #808080;border-bottom:1px solid #fff;border-right:1px solid #fff;box-shadow:inset 1px 1px #404040"></div><svg class="abs" style="left:11.0px;top:284.2px" width="8" height="8"><path d="M1 3.5 L3 5.8 L7 1.5" stroke="#000" stroke-width="1.6" fill="none"/></svg><div class="t" style="left:24.0px;top:283.82px;font-size:9.6px;transform:scaleX(0.955);transform-origin:0 0;color:#2a2a2a">Отбор керна</div><div class="abs" style="left:9.5px;top:302.9px;width:10.5px;height:10.5px;background:#fff;border-top:1px solid #808080;border-left:1px solid #808080;border-bottom:1px solid #fff;border-right:1px solid #fff;box-shadow:inset 1px 1px #404040"></div><svg class="abs" style="left:11.0px;top:304.4px" width="8" height="8"><path d="M1 3.5 L3 5.8 L7 1.5" stroke="#000" stroke-width="1.6" fill="none"/></svg><div class="t" style="left:24.0px;top:303.97px;font-size:9.6px;transform:scaleX(0.955);transform-origin:0 0;color:#2a2a2a">Контакты</div><div class="abs" style="left:3.5px;top:326.0px;width:233.0px;height:27.0px;border-top:1px solid #fff;border-left:1px solid #fff;border-bottom:1px solid #808080;border-right:1px solid #808080"></div><div class="abs" style="left:6.5px;top:329.0px;width:67.5px;height:20.5px;background:#d4d0c8;border-right:1px solid #404040;border-bottom:1px solid #404040;box-shadow:inset 1px 1px #fff,inset -1px -1px #808080"></div><div class="t" style="left:30.7px;top:335.47px;font-size:9.6px;transform:scaleX(0.955);transform-origin:0 0;color:#2a2a2a">Открыть</div><div class="abs" style="left:77.0px;top:329.0px;width:67.0px;height:20.5px;background:#d4d0c8;border-right:1px solid #404040;border-bottom:1px solid #404040;box-shadow:inset 1px 1px #fff,inset -1px -1px #808080"></div><div class="t" style="left:97.5px;top:335.47px;font-size:9.6px;transform:scaleX(0.955);transform-origin:0 0;color:#2a2a2a">Обновить</div><div class="abs" style="left:147.5px;top:329.0px;width:67.0px;height:20.5px;background:#d4d0c8;border-right:1px solid #404040;border-bottom:1px solid #404040;box-shadow:inset 1px 1px #fff,inset -1px -1px #808080"></div><div class="t" style="left:175.5px;top:335.47px;font-size:9.6px;transform:scaleX(0.955);transform-origin:0 0;color:#2a2a2a">Поиск</div><svg class="abs" style="left:15.0px;top:335.5px" width="14" height="10"><path d="M1 2 L5 2 L6 3 L11 3 L11 5 L4 5 L1 9Z" fill="#f0e060" stroke="#6a6a20" stroke-width="0.7"/><path d="M4 5 L13 5 L10 9 L1 9Z" fill="#e8d840" stroke="#6a6a20" stroke-width="0.7"/></svg><svg class="abs" style="left:83.0px;top:334.0px" width="14" height="12"><path d="M2 2 L7 1 L7 8 L2 9Z" fill="#fff" stroke="#555" stroke-width="0.7"/><path d="M7 2 L11 3 L11 9 L7 8Z" fill="#ddd" stroke="#555" stroke-width="0.7"/><rect x="8" y="9.5" width="4" height="2" fill="#c00"/></svg><svg class="abs" style="left:158.0px;top:333.0px" width="14" height="12"><circle cx="3.8" cy="7.5" r="3.2" fill="#111"/><circle cx="10.2" cy="7.5" r="3.2" fill="#111"/><rect x="2" y="1" width="3" height="5" fill="#111"/><rect x="9" y="1" width="3" height="5" fill="#111"/><rect x="5" y="4" width="4" height="3" fill="#111"/></svg><div class="abs" style="left:3.5px;top:359.5px;width:233.0px;height:146.5px;border:1px solid #808080;box-shadow:1px 1px #fff, inset 1px 1px #fff"></div><div class="abs" style="left:8.0px;top:354.0px;width:61.0px;height:10.0px;background:#d4d0c8"></div><div class="t" style="left:9.0px;top:355.77px;font-size:9.6px;transform:scaleX(0.955);transform-origin:0 0;color:#2a2a2a">Комментарий</div><div class="abs" style="left:5.0px;top:367.5px;width:230.0px;height:135.5px;background:#fff;border-top:1px solid #808080;border-left:1px solid #808080;border-bottom:1px solid #fff;border-right:1px solid #fff;box-shadow:inset 1px 1px #404040"></div><div class="t" style="left:9.1px;top:371.07px;font-size:9.6px;transform:scaleX(0.955);transform-origin:0 0;color:#2a2a2a">Состояние:</div><div class="t" style="left:9.1px;top:382.07px;font-size:9.6px;transform:scaleX(0.955);transform-origin:0 0;color:#2a2a2a">Обработка ПЗП гидрофобизаторами (конденсат и</div><div class="t" style="left:9.1px;top:393.07px;font-size:9.6px;transform:scaleX(0.955);transform-origin:0 0;color:#2a2a2a">отработанное моторное масло - 40 м3), отбивка</div><div class="t" style="left:9.1px;top:404.07px;font-size:9.6px;transform:scaleX(0.955);transform-origin:0 0;color:#2a2a2a">забоя на 1273 м. Деблокировка ПЗП (СКО - 5 м3),</div><div class="t" style="left:9.1px;top:415.07px;font-size:9.6px;transform:scaleX(0.955);transform-origin:0 0;color:#2a2a2a">отработка на факел (72 часа). Скважина работает в</div><div class="t" style="left:9.1px;top:426.07px;font-size:9.6px;transform:scaleX(0.955);transform-origin:0 0;color:#2a2a2a">шлейф. Параметры: Ртр=31, Рзтр=37, Ту=10. М</div><div class="t" style="left:9.1px;top:437.07px;font-size:9.6px;transform:scaleX(0.955);transform-origin:0 0;color:#2a2a2a">сначала снизилась до 8 г/л, к 03.2004 снова</div><div class="t" style="left:9.1px;top:448.07px;font-size:9.6px;transform:scaleX(0.955);transform-origin:0 0;color:#2a2a2a">поднялось до 18 г/л.</div><div class="abs" style="left:2.0px;top:507.5px;width:236.0px;height:14.0px;border-top:1px solid #808080;border-left:1px solid #808080;border-bottom:1px solid #fff;border-right:1px solid #fff"></div><div class="t" style="left:2.5px;top:511.77px;font-size:9.6px;transform:scaleX(0.955);transform-origin:0 0;color:#2a2a2a">База по сеноману С-Уренгой 58</div><svg class="abs" style="left:226.0px;top:510.0px" width="12" height="12"><path d="M11 2 L2 11 M11 5 L5 11 M11 8 L8 11" stroke="#808080" stroke-width="1"/><path d="M11 3 L3 11 M11 6 L6 11 M11 9 L9 11" stroke="#fff" stroke-width="1"/></svg></div><svg class="abs" style="left:547px;top:59px" width="253" height="525" viewBox="547 59 253 525"><rect x="547" y="59" width="253" height="525" fill="#fff"/><rect x="585" y="143.0" width="61" height="7.0" fill="#a9e25c"/><rect x="737" y="143.0" width="62" height="7.0" fill="#a9e25c"/><rect x="585" y="150.0" width="61" height="12.3" fill="#30ba20"/><rect x="737" y="150.0" width="62" height="12.3" fill="#30ba20"/><rect x="585" y="162.3" width="61" height="17.2" fill="#009c00"/><rect x="737" y="162.3" width="62" height="17.2" fill="#009c00"/><rect x="585" y="179.5" width="61" height="27.5" fill="#a9e25c"/><rect x="737" y="179.5" width="62" height="27.5" fill="#a9e25c"/><rect x="585" y="207.0" width="61" height="16.3" fill="#30ba20"/><rect x="737" y="207.0" width="62" height="16.3" fill="#30ba20"/><rect x="585" y="223.3" width="61" height="65.9" fill="#009c00"/><rect x="737" y="223.3" width="62" height="65.9" fill="#009c00"/><rect x="585" y="293.3" width="61" height="20.0" fill="#a9e25c"/><rect x="737" y="293.3" width="62" height="20.0" fill="#a9e25c"/><rect x="585" y="313.3" width="61" height="21.7" fill="#c4c4c4"/><rect x="737" y="313.3" width="62" height="21.7" fill="#c4c4c4"/><rect x="585" y="335.0" width="61" height="5.8" fill="#a9e25c"/><rect x="737" y="335.0" width="62" height="5.8" fill="#a9e25c"/><rect x="585" y="340.8" width="61" height="8.9" fill="#30ba20"/><rect x="737" y="340.8" width="62" height="8.9" fill="#30ba20"/><rect x="585" y="371.3" width="61" height="5.4" fill="#94da54"/><rect x="737" y="371.3" width="62" height="5.4" fill="#94da54"/><rect x="585" y="384.0" width="61" height="11.8" fill="#30ba20"/><rect x="737" y="384.0" width="62" height="11.8" fill="#30ba20"/><rect x="585" y="395.8" width="61" height="21.2" fill="#a9e25c"/><rect x="737" y="395.8" width="62" height="21.2" fill="#a9e25c"/><rect x="585" y="420.8" width="61" height="5.5" fill="#5cc640"/><rect x="737" y="420.8" width="62" height="5.5" fill="#5cc640"/><rect x="585" y="436.7" width="61" height="56.0" fill="#009c00"/><rect x="737" y="436.7" width="62" height="56.0" fill="#009c00"/><path d="M646 143 Q620 216 646 289 Z" fill="#f5a55c"/><path d="M737 143 Q763 216 737 289 Z" fill="#f5a55c"/><rect x="653.3" y="299" width="76.4" height="38" fill="#a6a6a6"/><rect x="653.3" y="337" width="76.4" height="116.3" fill="#7a7a7a"/><rect x="645.5" y="453.3" width="92" height="71.7" fill="#9c9c9c"/><path d="M645.5 453 L645.5 525 L737.5 525 L737.5 453" fill="none" stroke="#000" stroke-width="1"/><rect x="646.0" y="98.5" width="7.3" height="406.5" fill="#c497f4"/><rect x="729.7" y="98.5" width="7.3" height="406.5" fill="#c497f4"/><path d="M645.8 98 L645.8 144 M645.8 289 L645.8 505" stroke="#000" stroke-width="0.9"/><path d="M737.2 98 L737.2 144 M737.2 289 L737.2 505" stroke="#000" stroke-width="0.9"/><line x1="653.6" y1="98" x2="653.6" y2="505" stroke="#383838" stroke-width="0.8"/><line x1="729.4" y1="98" x2="729.4" y2="505" stroke="#383838" stroke-width="0.8"/><rect x="646" y="504" width="7.3" height="1.2" fill="#7a5a9a"/><rect x="729.7" y="504" width="7.3" height="1.2" fill="#7a5a9a"/><polyline points="662.5,98.0 663.5,104.0 661.5,110.0 662.5,116.0 661.5,122.0 662.5,128.0 661.5,134.0 662.0,141.0 668.0,151.0 680.0,153.0 693.0,155.0 710.0,157.0 716.0,159.0 730.0,162.0 734.0,165.0 734.0,178.0 730.0,180.0 703.0,181.0 697.0,184.0 706.0,187.0 713.0,188.0 697.0,190.0 680.0,192.0 677.0,196.0 690.0,199.0 697.0,200.0 683.0,202.0 678.0,206.0 693.0,208.0 697.0,212.0 720.0,216.0 727.0,218.0 733.0,219.0" fill="none" stroke="#2a2a90" stroke-width="1.1" stroke-linejoin="round"/><polyline points="737.0,300.0 718.0,303.0 697.0,306.0 685.0,307.0 682.0,310.0 684.0,313.0 677.0,321.0 685.0,324.0 672.0,328.0 679.0,332.0 676.0,340.0 681.0,342.0 690.0,343.0 702.0,345.0 712.0,346.0 704.0,348.0 690.0,349.0 672.0,351.0 670.0,357.0 674.0,359.0 668.0,365.0 670.0,370.0 682.0,372.0 670.0,377.0 663.0,379.0 670.0,386.0 683.0,391.0 692.0,395.0 688.0,395.5 675.0,398.0 691.0,402.0 680.0,407.0 670.0,413.0 669.0,419.0 683.0,421.0 668.0,425.0 664.0,428.0 667.0,433.0 667.0,438.0 673.0,444.0 680.0,448.0 687.0,449.0 700.0,450.0 718.0,453.0 727.0,454.0 727.0,457.0 730.0,458.0 736.0,460.0" fill="none" stroke="#1a1a88" stroke-width="1.3" stroke-linejoin="round"/><polyline points="737.0,474.0 718.0,477.0 730.0,479.0 724.0,483.0 730.0,485.0 736.0,488.0 737.0,492.0 736.0,496.0 725.0,497.0 737.0,497.5" fill="none" stroke="#2a2a90" stroke-width="1.1" stroke-linejoin="round"/><polyline points="720.8,98.0 721.5,106.0 720.5,114.0 721.5,122.0 721.0,132.0 720.0,140.0 705.0,144.0 700.0,148.0 697.0,152.0 693.0,160.0 690.0,168.0 693.0,172.0 697.0,172.0 693.0,175.0 695.0,178.0 700.0,181.0 702.0,183.0 698.0,186.0 700.0,190.0 698.0,195.0 700.0,200.0 701.0,205.0 697.0,210.0 693.0,215.0 692.0,225.0 687.0,225.5 684.0,231.0 690.0,236.0 692.0,240.0 691.0,245.0 685.0,252.0 681.0,261.0 688.0,265.0 689.0,271.0 682.0,277.0 683.0,282.0 677.0,288.0 684.0,292.0 693.0,294.0 697.0,296.0 696.0,300.0 693.0,305.0 700.0,307.0 697.0,312.0 700.0,310.0 705.0,317.0 708.0,323.0 703.0,327.0 708.0,329.0 703.0,333.0 697.0,337.0 693.0,341.0 690.0,346.0 697.0,350.0 707.0,352.0 703.0,357.0 710.0,360.0 712.0,366.0 715.0,371.0 697.0,374.0 707.0,378.0 717.0,381.0 705.0,385.0 693.0,390.0 690.0,395.0 690.0,399.0 697.0,402.0 700.0,408.0 703.0,413.0 710.0,419.0 695.0,421.0 704.0,425.0 716.0,432.0 705.0,438.0 690.0,443.0 683.0,445.0 679.0,453.0 677.0,463.0 678.0,470.0 686.0,477.0 676.0,483.0 673.0,487.0 673.0,498.0" fill="none" stroke="#e03030" stroke-width="1.1" stroke-linejoin="round"/><line x1="661" y1="145.5" x2="626" y2="145.5" stroke="#6a2000" stroke-width="0.8"/><path d="M623 145.5 L627.5 143.5 L627.5 147.5 Z" fill="#5a1800"/><line x1="722" y1="145.5" x2="757" y2="145.5" stroke="#6a2000" stroke-width="0.8"/><path d="M760.5 145.5 L756 143.5 L756 147.5 Z" fill="#5a1800"/><line x1="661" y1="152.2" x2="626" y2="152.2" stroke="#6a2000" stroke-width="0.8"/><path d="M623 152.2 L627.5 150.2 L627.5 154.2 Z" fill="#5a1800"/><line x1="722" y1="152.2" x2="757" y2="152.2" stroke="#6a2000" stroke-width="0.8"/><path d="M760.5 152.2 L756 150.2 L756 154.2 Z" fill="#5a1800"/><line x1="661" y1="158.9" x2="626" y2="158.9" stroke="#6a2000" stroke-width="0.8"/><path d="M623 158.9 L627.5 156.9 L627.5 160.9 Z" fill="#5a1800"/><line x1="722" y1="158.9" x2="757" y2="158.9" stroke="#6a2000" stroke-width="0.8"/><path d="M760.5 158.9 L756 156.9 L756 160.9 Z" fill="#5a1800"/><line x1="661" y1="165.6" x2="626" y2="165.6" stroke="#6a2000" stroke-width="0.8"/><path d="M623 165.6 L627.5 163.6 L627.5 167.6 Z" fill="#5a1800"/><line x1="722" y1="165.6" x2="757" y2="165.6" stroke="#6a2000" stroke-width="0.8"/><path d="M760.5 165.6 L756 163.6 L756 167.6 Z" fill="#5a1800"/><line x1="661" y1="172.3" x2="626" y2="172.3" stroke="#6a2000" stroke-width="0.8"/><path d="M623 172.3 L627.5 170.3 L627.5 174.3 Z" fill="#5a1800"/><line x1="722" y1="172.3" x2="757" y2="172.3" stroke="#6a2000" stroke-width="0.8"/><path d="M760.5 172.3 L756 170.3 L756 174.3 Z" fill="#5a1800"/><line x1="661" y1="179.0" x2="626" y2="179.0" stroke="#6a2000" stroke-width="0.8"/><path d="M623 179.0 L627.5 177.0 L627.5 181.0 Z" fill="#5a1800"/><line x1="722" y1="179.0" x2="757" y2="179.0" stroke="#6a2000" stroke-width="0.8"/><path d="M760.5 179.0 L756 177.0 L756 181.0 Z" fill="#5a1800"/><line x1="661" y1="185.7" x2="626" y2="185.7" stroke="#6a2000" stroke-width="0.8"/><path d="M623 185.7 L627.5 183.7 L627.5 187.7 Z" fill="#5a1800"/><line x1="722" y1="185.7" x2="757" y2="185.7" stroke="#6a2000" stroke-width="0.8"/><path d="M760.5 185.7 L756 183.7 L756 187.7 Z" fill="#5a1800"/><line x1="661" y1="192.4" x2="626" y2="192.4" stroke="#6a2000" stroke-width="0.8"/><path d="M623 192.4 L627.5 190.4 L627.5 194.4 Z" fill="#5a1800"/><line x1="722" y1="192.4" x2="757" y2="192.4" stroke="#6a2000" stroke-width="0.8"/><path d="M760.5 192.4 L756 190.4 L756 194.4 Z" fill="#5a1800"/><line x1="661" y1="199.1" x2="626" y2="199.1" stroke="#6a2000" stroke-width="0.8"/><path d="M623 199.1 L627.5 197.1 L627.5 201.1 Z" fill="#5a1800"/><line x1="722" y1="199.1" x2="757" y2="199.1" stroke="#6a2000" stroke-width="0.8"/><path d="M760.5 199.1 L756 197.1 L756 201.1 Z" fill="#5a1800"/><line x1="661" y1="205.8" x2="626" y2="205.8" stroke="#6a2000" stroke-width="0.8"/><path d="M623 205.8 L627.5 203.8 L627.5 207.8 Z" fill="#5a1800"/><line x1="722" y1="205.8" x2="757" y2="205.8" stroke="#6a2000" stroke-width="0.8"/><path d="M760.5 205.8 L756 203.8 L756 207.8 Z" fill="#5a1800"/><line x1="661" y1="212.5" x2="626" y2="212.5" stroke="#6a2000" stroke-width="0.8"/><path d="M623 212.5 L627.5 210.5 L627.5 214.5 Z" fill="#5a1800"/><line x1="722" y1="212.5" x2="757" y2="212.5" stroke="#6a2000" stroke-width="0.8"/><path d="M760.5 212.5 L756 210.5 L756 214.5 Z" fill="#5a1800"/><line x1="661" y1="219.2" x2="626" y2="219.2" stroke="#6a2000" stroke-width="0.8"/><path d="M623 219.2 L627.5 217.2 L627.5 221.2 Z" fill="#5a1800"/><line x1="722" y1="219.2" x2="757" y2="219.2" stroke="#6a2000" stroke-width="0.8"/><path d="M760.5 219.2 L756 217.2 L756 221.2 Z" fill="#5a1800"/><line x1="661" y1="225.9" x2="626" y2="225.9" stroke="#6a2000" stroke-width="0.8"/><path d="M623 225.9 L627.5 223.9 L627.5 227.9 Z" fill="#5a1800"/><line x1="722" y1="225.9" x2="757" y2="225.9" stroke="#6a2000" stroke-width="0.8"/><path d="M760.5 225.9 L756 223.9 L756 227.9 Z" fill="#5a1800"/><line x1="661" y1="232.6" x2="626" y2="232.6" stroke="#6a2000" stroke-width="0.8"/><path d="M623 232.6 L627.5 230.6 L627.5 234.6 Z" fill="#5a1800"/><line x1="722" y1="232.6" x2="757" y2="232.6" stroke="#6a2000" stroke-width="0.8"/><path d="M760.5 232.6 L756 230.6 L756 234.6 Z" fill="#5a1800"/><line x1="661" y1="239.3" x2="626" y2="239.3" stroke="#6a2000" stroke-width="0.8"/><path d="M623 239.3 L627.5 237.3 L627.5 241.3 Z" fill="#5a1800"/><line x1="722" y1="239.3" x2="757" y2="239.3" stroke="#6a2000" stroke-width="0.8"/><path d="M760.5 239.3 L756 237.3 L756 241.3 Z" fill="#5a1800"/><line x1="661" y1="246.0" x2="626" y2="246.0" stroke="#6a2000" stroke-width="0.8"/><path d="M623 246.0 L627.5 244.0 L627.5 248.0 Z" fill="#5a1800"/><line x1="722" y1="246.0" x2="757" y2="246.0" stroke="#6a2000" stroke-width="0.8"/><path d="M760.5 246.0 L756 244.0 L756 248.0 Z" fill="#5a1800"/><line x1="661" y1="252.7" x2="626" y2="252.7" stroke="#6a2000" stroke-width="0.8"/><path d="M623 252.7 L627.5 250.7 L627.5 254.7 Z" fill="#5a1800"/><line x1="722" y1="252.7" x2="757" y2="252.7" stroke="#6a2000" stroke-width="0.8"/><path d="M760.5 252.7 L756 250.7 L756 254.7 Z" fill="#5a1800"/><line x1="661" y1="259.4" x2="626" y2="259.4" stroke="#6a2000" stroke-width="0.8"/><path d="M623 259.4 L627.5 257.4 L627.5 261.4 Z" fill="#5a1800"/><line x1="722" y1="259.4" x2="757" y2="259.4" stroke="#6a2000" stroke-width="0.8"/><path d="M760.5 259.4 L756 257.4 L756 261.4 Z" fill="#5a1800"/><line x1="661" y1="266.1" x2="626" y2="266.1" stroke="#6a2000" stroke-width="0.8"/><path d="M623 266.1 L627.5 264.1 L627.5 268.1 Z" fill="#5a1800"/><line x1="722" y1="266.1" x2="757" y2="266.1" stroke="#6a2000" stroke-width="0.8"/><path d="M760.5 266.1 L756 264.1 L756 268.1 Z" fill="#5a1800"/><line x1="661" y1="272.8" x2="626" y2="272.8" stroke="#6a2000" stroke-width="0.8"/><path d="M623 272.8 L627.5 270.8 L627.5 274.8 Z" fill="#5a1800"/><line x1="722" y1="272.8" x2="757" y2="272.8" stroke="#6a2000" stroke-width="0.8"/><path d="M760.5 272.8 L756 270.8 L756 274.8 Z" fill="#5a1800"/><line x1="661" y1="279.5" x2="626" y2="279.5" stroke="#6a2000" stroke-width="0.8"/><path d="M623 279.5 L627.5 277.5 L627.5 281.5 Z" fill="#5a1800"/><line x1="722" y1="279.5" x2="757" y2="279.5" stroke="#6a2000" stroke-width="0.8"/><path d="M760.5 279.5 L756 277.5 L756 281.5 Z" fill="#5a1800"/><line x1="661" y1="286.2" x2="626" y2="286.2" stroke="#6a2000" stroke-width="0.8"/><path d="M623 286.2 L627.5 284.2 L627.5 288.2 Z" fill="#5a1800"/><line x1="722" y1="286.2" x2="757" y2="286.2" stroke="#6a2000" stroke-width="0.8"/><path d="M760.5 286.2 L756 284.2 L756 288.2 Z" fill="#5a1800"/><rect x="640" y="146.0" width="13.6" height="3.5" fill="#808080"/><rect x="729.7" y="146.0" width="13.6" height="3.5" fill="#808080"/><rect x="640" y="154.4" width="13.6" height="3.5" fill="#808080"/><rect x="729.7" y="154.4" width="13.6" height="3.5" fill="#808080"/><rect x="640" y="162.8" width="13.6" height="3.5" fill="#808080"/><rect x="729.7" y="162.8" width="13.6" height="3.5" fill="#808080"/><rect x="640" y="171.2" width="13.6" height="3.5" fill="#808080"/><rect x="729.7" y="171.2" width="13.6" height="3.5" fill="#808080"/><rect x="640" y="179.6" width="13.6" height="3.5" fill="#808080"/><rect x="729.7" y="179.6" width="13.6" height="3.5" fill="#808080"/><rect x="640" y="188.0" width="13.6" height="3.5" fill="#808080"/><rect x="729.7" y="188.0" width="13.6" height="3.5" fill="#808080"/><rect x="640" y="196.4" width="13.6" height="3.5" fill="#808080"/><rect x="729.7" y="196.4" width="13.6" height="3.5" fill="#808080"/><rect x="640" y="204.8" width="13.6" height="3.5" fill="#808080"/><rect x="729.7" y="204.8" width="13.6" height="3.5" fill="#808080"/><rect x="640" y="213.2" width="13.6" height="3.5" fill="#808080"/><rect x="729.7" y="213.2" width="13.6" height="3.5" fill="#808080"/><rect x="640" y="221.6" width="13.6" height="3.5" fill="#808080"/><rect x="729.7" y="221.6" width="13.6" height="3.5" fill="#808080"/><rect x="640" y="230.0" width="13.6" height="3.5" fill="#808080"/><rect x="729.7" y="230.0" width="13.6" height="3.5" fill="#808080"/><rect x="640" y="238.4" width="13.6" height="3.5" fill="#808080"/><rect x="729.7" y="238.4" width="13.6" height="3.5" fill="#808080"/><rect x="640" y="246.8" width="13.6" height="3.5" fill="#808080"/><rect x="729.7" y="246.8" width="13.6" height="3.5" fill="#808080"/><rect x="640" y="255.2" width="13.6" height="3.5" fill="#808080"/><rect x="729.7" y="255.2" width="13.6" height="3.5" fill="#808080"/><rect x="640" y="263.6" width="13.6" height="3.5" fill="#808080"/><rect x="729.7" y="263.6" width="13.6" height="3.5" fill="#808080"/><rect x="640" y="272.0" width="13.6" height="3.5" fill="#808080"/><rect x="729.7" y="272.0" width="13.6" height="3.5" fill="#808080"/><rect x="640" y="280.4" width="13.6" height="3.5" fill="#808080"/><rect x="729.7" y="280.4" width="13.6" height="3.5" fill="#808080"/><rect x="679" y="298" width="25" height="2.5" fill="#000"/><rect x="677" y="98.5" width="30" height="81.5" fill="none" stroke="#000" stroke-width="1.6"/><line x1="691.5" y1="98" x2="691.5" y2="545" stroke="#000" stroke-width="0.8"/><line x1="691.5" y1="101.5" x2="695" y2="101.5" stroke="#000" stroke-width="0.7"/><line x1="691.5" y1="109.9" x2="695" y2="109.9" stroke="#000" stroke-width="0.7"/><line x1="691.5" y1="118.3" x2="695" y2="118.3" stroke="#000" stroke-width="0.7"/><line x1="691.5" y1="126.7" x2="695" y2="126.7" stroke="#000" stroke-width="0.7"/><line x1="691.5" y1="135.1" x2="695" y2="135.1" stroke="#000" stroke-width="0.7"/><line x1="691.5" y1="143.5" x2="695" y2="143.5" stroke="#000" stroke-width="0.7"/><line x1="691.5" y1="151.9" x2="695" y2="151.9" stroke="#000" stroke-width="0.7"/><line x1="691.5" y1="160.3" x2="695" y2="160.3" stroke="#000" stroke-width="0.7"/><line x1="691.5" y1="168.7" x2="695" y2="168.7" stroke="#000" stroke-width="0.7"/><line x1="691.5" y1="177.1" x2="695" y2="177.1" stroke="#000" stroke-width="0.7"/><line x1="691.5" y1="185.5" x2="695" y2="185.5" stroke="#000" stroke-width="0.7"/><line x1="691.5" y1="193.9" x2="695" y2="193.9" stroke="#000" stroke-width="0.7"/><line x1="691.5" y1="202.3" x2="695" y2="202.3" stroke="#000" stroke-width="0.7"/><line x1="691.5" y1="210.7" x2="695" y2="210.7" stroke="#000" stroke-width="0.7"/><line x1="691.5" y1="219.1" x2="695" y2="219.1" stroke="#000" stroke-width="0.7"/><line x1="691.5" y1="227.5" x2="695" y2="227.5" stroke="#000" stroke-width="0.7"/><line x1="691.5" y1="235.9" x2="695" y2="235.9" stroke="#000" stroke-width="0.7"/><line x1="691.5" y1="244.3" x2="695" y2="244.3" stroke="#000" stroke-width="0.7"/><line x1="691.5" y1="252.7" x2="695" y2="252.7" stroke="#000" stroke-width="0.7"/><line x1="691.5" y1="261.1" x2="695" y2="261.1" stroke="#000" stroke-width="0.7"/><line x1="691.5" y1="269.5" x2="695" y2="269.5" stroke="#000" stroke-width="0.7"/><line x1="691.5" y1="277.9" x2="695" y2="277.9" stroke="#000" stroke-width="0.7"/><line x1="691.5" y1="286.3" x2="695" y2="286.3" stroke="#000" stroke-width="0.7"/><line x1="691.5" y1="294.7" x2="695" y2="294.7" stroke="#000" stroke-width="0.7"/><line x1="691.5" y1="303.1" x2="695" y2="303.1" stroke="#000" stroke-width="0.7"/><line x1="691.5" y1="311.5" x2="695" y2="311.5" stroke="#000" stroke-width="0.7"/><line x1="691.5" y1="319.9" x2="695" y2="319.9" stroke="#000" stroke-width="0.7"/><line x1="691.5" y1="328.3" x2="695" y2="328.3" stroke="#000" stroke-width="0.7"/><line x1="691.5" y1="336.7" x2="695" y2="336.7" stroke="#000" stroke-width="0.7"/><line x1="691.5" y1="345.1" x2="695" y2="345.1" stroke="#000" stroke-width="0.7"/><line x1="691.5" y1="353.5" x2="695" y2="353.5" stroke="#000" stroke-width="0.7"/><line x1="691.5" y1="361.9" x2="695" y2="361.9" stroke="#000" stroke-width="0.7"/><line x1="691.5" y1="370.3" x2="695" y2="370.3" stroke="#000" stroke-width="0.7"/><line x1="691.5" y1="378.7" x2="695" y2="378.7" stroke="#000" stroke-width="0.7"/><line x1="691.5" y1="387.1" x2="695" y2="387.1" stroke="#000" stroke-width="0.7"/><line x1="691.5" y1="395.5" x2="695" y2="395.5" stroke="#000" stroke-width="0.7"/><line x1="691.5" y1="403.9" x2="695" y2="403.9" stroke="#000" stroke-width="0.7"/><line x1="691.5" y1="412.3" x2="695" y2="412.3" stroke="#000" stroke-width="0.7"/><line x1="691.5" y1="420.7" x2="695" y2="420.7" stroke="#000" stroke-width="0.7"/><line x1="691.5" y1="429.1" x2="695" y2="429.1" stroke="#000" stroke-width="0.7"/><line x1="691.5" y1="437.5" x2="695" y2="437.5" stroke="#000" stroke-width="0.7"/><line x1="691.5" y1="445.9" x2="695" y2="445.9" stroke="#000" stroke-width="0.7"/><line x1="691.5" y1="454.3" x2="695" y2="454.3" stroke="#000" stroke-width="0.7"/><line x1="691.5" y1="462.7" x2="695" y2="462.7" stroke="#000" stroke-width="0.7"/><line x1="691.5" y1="471.1" x2="695" y2="471.1" stroke="#000" stroke-width="0.7"/><line x1="691.5" y1="479.5" x2="695" y2="479.5" stroke="#000" stroke-width="0.7"/><line x1="691.5" y1="487.9" x2="695" y2="487.9" stroke="#000" stroke-width="0.7"/><line x1="691.5" y1="496.3" x2="695" y2="496.3" stroke="#000" stroke-width="0.7"/><line x1="691.5" y1="504.7" x2="695" y2="504.7" stroke="#000" stroke-width="0.7"/><line x1="691.5" y1="513.1" x2="695" y2="513.1" stroke="#000" stroke-width="0.7"/><line x1="691.5" y1="521.5" x2="695" y2="521.5" stroke="#000" stroke-width="0.7"/><line x1="691.5" y1="529.9" x2="695" y2="529.9" stroke="#000" stroke-width="0.7"/><line x1="691.5" y1="538.3" x2="695" y2="538.3" stroke="#000" stroke-width="0.7"/><line x1="691.5" y1="126.5" x2="775" y2="126.5" stroke="#202020" stroke-width="1"/><line x1="691.5" y1="165.5" x2="775" y2="165.5" stroke="#202020" stroke-width="1"/><line x1="691.5" y1="206.5" x2="775" y2="206.5" stroke="#202020" stroke-width="1"/><line x1="691.5" y1="246.5" x2="775" y2="246.5" stroke="#202020" stroke-width="1"/><line x1="691.5" y1="286.5" x2="775" y2="286.5" stroke="#202020" stroke-width="1"/><line x1="691.5" y1="327.5" x2="775" y2="327.5" stroke="#202020" stroke-width="1"/><line x1="691.5" y1="371.5" x2="775" y2="371.5" stroke="#202020" stroke-width="1"/><line x1="691.5" y1="414.5" x2="775" y2="414.5" stroke="#202020" stroke-width="1"/><line x1="691.5" y1="458.5" x2="775" y2="458.5" stroke="#202020" stroke-width="1"/><line x1="691.5" y1="503.5" x2="775" y2="503.5" stroke="#202020" stroke-width="1"/><rect x="585" y="401" width="214" height="2.2" fill="#d42410"/><rect x="775.3" y="121.7" width="18" height="10.3" fill="#fff"/><text x="784.3" y="129.2" font-family="Liberation Sans" font-size="9" text-anchor="middle" fill="#222" letter-spacing="-0.3">1230</text><rect x="775.3" y="161.2" width="18" height="10.3" fill="#fff"/><text x="784.3" y="168.7" font-family="Liberation Sans" font-size="9" text-anchor="middle" fill="#222" letter-spacing="-0.3">1240</text><rect x="775.3" y="202.0" width="18" height="10.3" fill="#fff"/><text x="784.3" y="209.5" font-family="Liberation Sans" font-size="9" text-anchor="middle" fill="#222" letter-spacing="-0.3">1250</text><rect x="775.3" y="241.7" width="18" height="10.3" fill="#fff"/><text x="784.3" y="249.2" font-family="Liberation Sans" font-size="9" text-anchor="middle" fill="#222" letter-spacing="-0.3">1260</text><rect x="775.3" y="281.9" width="18" height="10.3" fill="#fff"/><text x="784.3" y="289.4" font-family="Liberation Sans" font-size="9" text-anchor="middle" fill="#222" letter-spacing="-0.3">1270</text><rect x="775.3" y="322.7" width="18" height="10.3" fill="#fff"/><text x="784.3" y="330.2" font-family="Liberation Sans" font-size="9" text-anchor="middle" fill="#222" letter-spacing="-0.3">1280</text><rect x="775.3" y="366.9" width="18" height="10.3" fill="#fff"/><text x="784.3" y="374.4" font-family="Liberation Sans" font-size="9" text-anchor="middle" fill="#222" letter-spacing="-0.3">1290</text><rect x="775.3" y="410.3" width="18" height="10.3" fill="#fff"/><text x="784.3" y="417.8" font-family="Liberation Sans" font-size="9" text-anchor="middle" fill="#222" letter-spacing="-0.3">1300</text><rect x="775.3" y="454.2" width="18" height="10.3" fill="#fff"/><text x="784.3" y="461.7" font-family="Liberation Sans" font-size="9" text-anchor="middle" fill="#222" letter-spacing="-0.3">1310</text><rect x="775.3" y="499.5" width="18" height="10.3" fill="#fff"/><text x="784.3" y="507.0" font-family="Liberation Sans" font-size="9" text-anchor="middle" fill="#222" letter-spacing="-0.3">1320</text><rect x="643.5" y="102.5" width="10" height="16.5" fill="#dcdcd4"/><text transform="translate(651.5,110.7) rotate(-90)" font-family="Liberation Sans" font-size="9" text-anchor="middle" fill="#222" letter-spacing="-0.3">168</text><rect x="667.3" y="108" width="9.5" height="11.3" fill="#dcdcd4"/><text transform="translate(675.2,113.6) rotate(-90)" font-family="Liberation Sans" font-size="9" text-anchor="middle" fill="#222">89</text><text x="692" y="97" font-family="Liberation Serif" font-size="12.5" text-anchor="middle" fill="#222">15164</text><line x1="584.6" y1="98.3" x2="799.5" y2="98.3" stroke="#000" stroke-width="1.5"/><line x1="584.6" y1="97.6" x2="584.6" y2="545" stroke="#000" stroke-width="1.4"/><line x1="799.2" y1="98" x2="799.2" y2="545" stroke="#303030" stroke-width="1.2"/><line x1="584" y1="544.8" x2="799.5" y2="544.8" stroke="#777" stroke-width="1.2"/><line x1="581" y1="98.3" x2="584" y2="98.3" stroke="#333" stroke-width="0.8"/><text x="580.3" y="101.5" font-family="Liberation Sans" font-size="8.6" text-anchor="end" fill="#333" letter-spacing="-0.35">1,095</text><line x1="582.5" y1="103.2" x2="584" y2="103.2" stroke="#666" stroke-width="0.6"/><line x1="582.5" y1="108.1" x2="584" y2="108.1" stroke="#666" stroke-width="0.6"/><line x1="582.5" y1="113.0" x2="584" y2="113.0" stroke="#666" stroke-width="0.6"/><line x1="582.5" y1="117.9" x2="584" y2="117.9" stroke="#666" stroke-width="0.6"/><line x1="581" y1="122.8" x2="584" y2="122.8" stroke="#333" stroke-width="0.8"/><text x="580.3" y="126.0" font-family="Liberation Sans" font-size="8.6" text-anchor="end" fill="#333" letter-spacing="-0.35">1,100</text><line x1="582.5" y1="127.7" x2="584" y2="127.7" stroke="#666" stroke-width="0.6"/><line x1="582.5" y1="132.6" x2="584" y2="132.6" stroke="#666" stroke-width="0.6"/><line x1="582.5" y1="137.5" x2="584" y2="137.5" stroke="#666" stroke-width="0.6"/><line x1="582.5" y1="142.4" x2="584" y2="142.4" stroke="#666" stroke-width="0.6"/><line x1="581" y1="147.3" x2="584" y2="147.3" stroke="#333" stroke-width="0.8"/><text x="580.3" y="150.5" font-family="Liberation Sans" font-size="8.6" text-anchor="end" fill="#333" letter-spacing="-0.35">1,105</text><line x1="582.5" y1="152.2" x2="584" y2="152.2" stroke="#666" stroke-width="0.6"/><line x1="582.5" y1="157.1" x2="584" y2="157.1" stroke="#666" stroke-width="0.6"/><line x1="582.5" y1="162.0" x2="584" y2="162.0" stroke="#666" stroke-width="0.6"/><line x1="582.5" y1="166.9" x2="584" y2="166.9" stroke="#666" stroke-width="0.6"/><line x1="581" y1="171.8" x2="584" y2="171.8" stroke="#333" stroke-width="0.8"/><text x="580.3" y="175.0" font-family="Liberation Sans" font-size="8.6" text-anchor="end" fill="#333" letter-spacing="-0.35">1,110</text><line x1="582.5" y1="176.7" x2="584" y2="176.7" stroke="#666" stroke-width="0.6"/><line x1="582.5" y1="181.6" x2="584" y2="181.6" stroke="#666" stroke-width="0.6"/><line x1="582.5" y1="186.5" x2="584" y2="186.5" stroke="#666" stroke-width="0.6"/><line x1="582.5" y1="191.4" x2="584" y2="191.4" stroke="#666" stroke-width="0.6"/><line x1="581" y1="196.3" x2="584" y2="196.3" stroke="#333" stroke-width="0.8"/><text x="580.3" y="199.5" font-family="Liberation Sans" font-size="8.6" text-anchor="end" fill="#333" letter-spacing="-0.35">1,115</text><line x1="582.5" y1="201.2" x2="584" y2="201.2" stroke="#666" stroke-width="0.6"/><line x1="582.5" y1="206.1" x2="584" y2="206.1" stroke="#666" stroke-width="0.6"/><line x1="582.5" y1="211.0" x2="584" y2="211.0" stroke="#666" stroke-width="0.6"/><line x1="582.5" y1="215.9" x2="584" y2="215.9" stroke="#666" stroke-width="0.6"/><line x1="581" y1="220.8" x2="584" y2="220.8" stroke="#333" stroke-width="0.8"/><text x="580.3" y="224.0" font-family="Liberation Sans" font-size="8.6" text-anchor="end" fill="#333" letter-spacing="-0.35">1,120</text><line x1="582.5" y1="225.7" x2="584" y2="225.7" stroke="#666" stroke-width="0.6"/><line x1="582.5" y1="230.6" x2="584" y2="230.6" stroke="#666" stroke-width="0.6"/><line x1="582.5" y1="235.5" x2="584" y2="235.5" stroke="#666" stroke-width="0.6"/><line x1="582.5" y1="240.4" x2="584" y2="240.4" stroke="#666" stroke-width="0.6"/><line x1="581" y1="245.3" x2="584" y2="245.3" stroke="#333" stroke-width="0.8"/><text x="580.3" y="248.5" font-family="Liberation Sans" font-size="8.6" text-anchor="end" fill="#333" letter-spacing="-0.35">1,125</text><line x1="582.5" y1="250.2" x2="584" y2="250.2" stroke="#666" stroke-width="0.6"/><line x1="582.5" y1="255.1" x2="584" y2="255.1" stroke="#666" stroke-width="0.6"/><line x1="582.5" y1="260.0" x2="584" y2="260.0" stroke="#666" stroke-width="0.6"/><line x1="582.5" y1="264.9" x2="584" y2="264.9" stroke="#666" stroke-width="0.6"/><line x1="581" y1="269.8" x2="584" y2="269.8" stroke="#333" stroke-width="0.8"/><text x="580.3" y="273.0" font-family="Liberation Sans" font-size="8.6" text-anchor="end" fill="#333" letter-spacing="-0.35">1,130</text><line x1="582.5" y1="274.7" x2="584" y2="274.7" stroke="#666" stroke-width="0.6"/><line x1="582.5" y1="279.6" x2="584" y2="279.6" stroke="#666" stroke-width="0.6"/><line x1="582.5" y1="284.5" x2="584" y2="284.5" stroke="#666" stroke-width="0.6"/><line x1="582.5" y1="289.4" x2="584" y2="289.4" stroke="#666" stroke-width="0.6"/><line x1="581" y1="294.3" x2="584" y2="294.3" stroke="#333" stroke-width="0.8"/><text x="580.3" y="297.5" font-family="Liberation Sans" font-size="8.6" text-anchor="end" fill="#333" letter-spacing="-0.35">1,135</text><line x1="582.5" y1="299.2" x2="584" y2="299.2" stroke="#666" stroke-width="0.6"/><line x1="582.5" y1="304.1" x2="584" y2="304.1" stroke="#666" stroke-width="0.6"/><line x1="582.5" y1="309.0" x2="584" y2="309.0" stroke="#666" stroke-width="0.6"/><line x1="582.5" y1="313.9" x2="584" y2="313.9" stroke="#666" stroke-width="0.6"/><line x1="581" y1="318.8" x2="584" y2="318.8" stroke="#333" stroke-width="0.8"/><text x="580.3" y="322.0" font-family="Liberation Sans" font-size="8.6" text-anchor="end" fill="#333" letter-spacing="-0.35">1,140</text><line x1="582.5" y1="323.7" x2="584" y2="323.7" stroke="#666" stroke-width="0.6"/><line x1="582.5" y1="328.6" x2="584" y2="328.6" stroke="#666" stroke-width="0.6"/><line x1="582.5" y1="333.5" x2="584" y2="333.5" stroke="#666" stroke-width="0.6"/><line x1="582.5" y1="338.4" x2="584" y2="338.4" stroke="#666" stroke-width="0.6"/><line x1="581" y1="343.3" x2="584" y2="343.3" stroke="#333" stroke-width="0.8"/><text x="580.3" y="346.5" font-family="Liberation Sans" font-size="8.6" text-anchor="end" fill="#333" letter-spacing="-0.35">1,145</text><line x1="582.5" y1="348.2" x2="584" y2="348.2" stroke="#666" stroke-width="0.6"/><line x1="582.5" y1="353.1" x2="584" y2="353.1" stroke="#666" stroke-width="0.6"/><line x1="582.5" y1="358.0" x2="584" y2="358.0" stroke="#666" stroke-width="0.6"/><line x1="582.5" y1="362.9" x2="584" y2="362.9" stroke="#666" stroke-width="0.6"/><line x1="581" y1="367.8" x2="584" y2="367.8" stroke="#333" stroke-width="0.8"/><text x="580.3" y="371.0" font-family="Liberation Sans" font-size="8.6" text-anchor="end" fill="#333" letter-spacing="-0.35">1,150</text><line x1="582.5" y1="372.7" x2="584" y2="372.7" stroke="#666" stroke-width="0.6"/><line x1="582.5" y1="377.6" x2="584" y2="377.6" stroke="#666" stroke-width="0.6"/><line x1="582.5" y1="382.5" x2="584" y2="382.5" stroke="#666" stroke-width="0.6"/><line x1="582.5" y1="387.4" x2="584" y2="387.4" stroke="#666" stroke-width="0.6"/><line x1="581" y1="392.3" x2="584" y2="392.3" stroke="#333" stroke-width="0.8"/><text x="580.3" y="395.5" font-family="Liberation Sans" font-size="8.6" text-anchor="end" fill="#333" letter-spacing="-0.35">1,155</text><line x1="582.5" y1="397.2" x2="584" y2="397.2" stroke="#666" stroke-width="0.6"/><line x1="582.5" y1="402.1" x2="584" y2="402.1" stroke="#666" stroke-width="0.6"/><line x1="582.5" y1="407.0" x2="584" y2="407.0" stroke="#666" stroke-width="0.6"/><line x1="582.5" y1="411.9" x2="584" y2="411.9" stroke="#666" stroke-width="0.6"/><line x1="581" y1="416.8" x2="584" y2="416.8" stroke="#333" stroke-width="0.8"/><text x="580.3" y="420.0" font-family="Liberation Sans" font-size="8.6" text-anchor="end" fill="#333" letter-spacing="-0.35">1,160</text><line x1="582.5" y1="421.7" x2="584" y2="421.7" stroke="#666" stroke-width="0.6"/><line x1="582.5" y1="426.6" x2="584" y2="426.6" stroke="#666" stroke-width="0.6"/><line x1="582.5" y1="431.5" x2="584" y2="431.5" stroke="#666" stroke-width="0.6"/><line x1="582.5" y1="436.4" x2="584" y2="436.4" stroke="#666" stroke-width="0.6"/><line x1="581" y1="441.3" x2="584" y2="441.3" stroke="#333" stroke-width="0.8"/><text x="580.3" y="444.5" font-family="Liberation Sans" font-size="8.6" text-anchor="end" fill="#333" letter-spacing="-0.35">1,165</text><line x1="582.5" y1="446.2" x2="584" y2="446.2" stroke="#666" stroke-width="0.6"/><line x1="582.5" y1="451.1" x2="584" y2="451.1" stroke="#666" stroke-width="0.6"/><line x1="582.5" y1="456.0" x2="584" y2="456.0" stroke="#666" stroke-width="0.6"/><line x1="582.5" y1="460.9" x2="584" y2="460.9" stroke="#666" stroke-width="0.6"/><line x1="581" y1="465.8" x2="584" y2="465.8" stroke="#333" stroke-width="0.8"/><text x="580.3" y="469.0" font-family="Liberation Sans" font-size="8.6" text-anchor="end" fill="#333" letter-spacing="-0.35">1,170</text><line x1="582.5" y1="470.7" x2="584" y2="470.7" stroke="#666" stroke-width="0.6"/><line x1="582.5" y1="475.6" x2="584" y2="475.6" stroke="#666" stroke-width="0.6"/><line x1="582.5" y1="480.5" x2="584" y2="480.5" stroke="#666" stroke-width="0.6"/><line x1="582.5" y1="485.4" x2="584" y2="485.4" stroke="#666" stroke-width="0.6"/><line x1="581" y1="490.3" x2="584" y2="490.3" stroke="#333" stroke-width="0.8"/><text x="580.3" y="493.5" font-family="Liberation Sans" font-size="8.6" text-anchor="end" fill="#333" letter-spacing="-0.35">1,175</text><line x1="582.5" y1="495.2" x2="584" y2="495.2" stroke="#666" stroke-width="0.6"/><line x1="582.5" y1="500.1" x2="584" y2="500.1" stroke="#666" stroke-width="0.6"/><line x1="582.5" y1="505.0" x2="584" y2="505.0" stroke="#666" stroke-width="0.6"/><line x1="582.5" y1="509.9" x2="584" y2="509.9" stroke="#666" stroke-width="0.6"/><line x1="581" y1="514.8" x2="584" y2="514.8" stroke="#333" stroke-width="0.8"/><text x="580.3" y="518.0" font-family="Liberation Sans" font-size="8.6" text-anchor="end" fill="#333" letter-spacing="-0.35">1,180</text><line x1="582.5" y1="519.7" x2="584" y2="519.7" stroke="#666" stroke-width="0.6"/><line x1="582.5" y1="524.6" x2="584" y2="524.6" stroke="#666" stroke-width="0.6"/><line x1="582.5" y1="529.5" x2="584" y2="529.5" stroke="#666" stroke-width="0.6"/><line x1="582.5" y1="534.4" x2="584" y2="534.4" stroke="#666" stroke-width="0.6"/><line x1="581" y1="539.3" x2="584" y2="539.3" stroke="#333" stroke-width="0.8"/><text x="580.3" y="542.5" font-family="Liberation Sans" font-size="8.6" text-anchor="end" fill="#333" letter-spacing="-0.35">1,185</text><line x1="582.5" y1="544.2" x2="584" y2="544.2" stroke="#666" stroke-width="0.6"/><path d="M677.5 525.5 L705 525.5 L691.5 541 Z" fill="#111"/><rect x="670" y="528.5" width="40" height="0.9" fill="#fff"/><rect x="670" y="531.8" width="40" height="0.9" fill="#fff"/><rect x="670" y="535.0" width="40" height="0.9" fill="#fff"/><rect x="670" y="538.0" width="40" height="0.9" fill="#fff"/><line x1="691.5" y1="525" x2="691.5" y2="543" stroke="#000" stroke-width="0.8"/><text x="600.5" y="562.3" font-family="Liberation Serif" font-size="13.5" fill="#222" textLength="145" lengthAdjust="spacingAndGlyphs">ÊÐÑ (î áðàáî òêà Ï Ç Ï ) 2003 ã.</text></svg></body></html>
